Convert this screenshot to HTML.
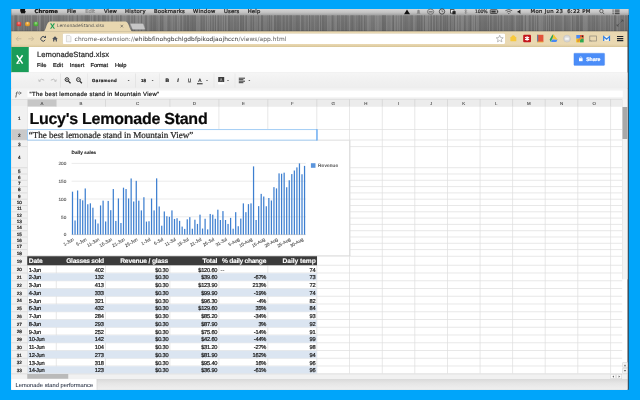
<!DOCTYPE html>
<html><head><meta charset="utf-8"><title>LemonadeStand.xlsx</title>
<style>
html,body{margin:0;padding:0;}
html{width:640px;height:400px;overflow:hidden;}
body{width:640px;height:400px;overflow:hidden;background:#00a5fa;position:relative;font-family:"Liberation Sans",sans-serif;}
div{position:absolute;box-sizing:border-box;}
.t{white-space:nowrap;color:#222;-webkit-text-stroke:0.22px;text-rendering:geometricPrecision;}
.b{font-weight:bold;}
svg{position:absolute;overflow:visible;}
</style></head><body><div id="w" style="left:0;top:0;width:2560px;height:1600px;transform:scale(0.25);transform-origin:0 0;-webkit-mask-image:linear-gradient(#000,#000);mask-image:linear-gradient(#000,#000);"><div id="z" style="left:0;top:0;width:640px;height:400px;zoom:4;">

<div style="left:11.30px;top:8.90px;width:617.50px;height:380.90px;background:#3c3c42;"></div>
<div style="left:11.30px;top:8.90px;width:617.50px;height:6.20px;background:linear-gradient(#d6d6d6,#c4c4c4 55%,#a4a4a4);"></div>
<div class="t" style="font-size:5.3px;line-height:6.36px;top:8.32px;letter-spacing:0.078px;left:34.50px;font-family:'DejaVu Sans','Liberation Sans',sans-serif;color:#111;font-weight:bold;">Chrome</div>
<div class="t" style="font-size:5.3px;line-height:6.36px;top:8.32px;letter-spacing:0.031px;left:67.00px;font-family:'DejaVu Sans','Liberation Sans',sans-serif;color:#1c1c1c;">File</div>
<div class="t" style="font-size:5.3px;line-height:6.36px;top:8.32px;letter-spacing:-0.141px;left:85.30px;font-family:'DejaVu Sans','Liberation Sans',sans-serif;color:#8a8a8a;">Edit</div>
<div class="t" style="font-size:5.3px;line-height:6.36px;top:8.32px;letter-spacing:0.105px;left:104.00px;font-family:'DejaVu Sans','Liberation Sans',sans-serif;color:#1c1c1c;">View</div>
<div class="t" style="font-size:5.3px;line-height:6.36px;top:8.32px;letter-spacing:0.306px;left:125.00px;font-family:'DejaVu Sans','Liberation Sans',sans-serif;color:#1c1c1c;">History</div>
<div class="t" style="font-size:5.3px;line-height:6.36px;top:8.32px;letter-spacing:0.156px;left:154.00px;font-family:'DejaVu Sans','Liberation Sans',sans-serif;color:#1c1c1c;">Bookmarks</div>
<div class="t" style="font-size:5.3px;line-height:6.36px;top:8.32px;letter-spacing:0.268px;left:193.00px;font-family:'DejaVu Sans','Liberation Sans',sans-serif;color:#1c1c1c;">Window</div>
<div class="t" style="font-size:5.3px;line-height:6.36px;top:8.32px;letter-spacing:0.131px;left:224.00px;font-family:'DejaVu Sans','Liberation Sans',sans-serif;color:#1c1c1c;">Users</div>
<div class="t" style="font-size:5.3px;line-height:6.36px;top:8.32px;letter-spacing:0.180px;left:247.70px;font-family:'DejaVu Sans','Liberation Sans',sans-serif;color:#1c1c1c;">Help</div>
<svg style="left:19.8px;top:8.9px" width="7" height="5" viewBox="0 0 7 5"><path d="M0.6 0 C0.2 1.2 0.5 3 1.6 4.3 C2.2 4.8 2.8 4.3 3.3 4.3 C3.8 4.3 4.4 4.8 5 4.3 C5.6 3.7 6 2.9 6.1 2.5 C5 2 4.9 0.8 5.6 0 Z" fill="#111"/></svg>
<div class="t" style="font-size:4.6px;line-height:5.52px;top:8.74px;letter-spacing:-0.160px;left:475.00px;font-family:'DejaVu Sans','Liberation Sans',sans-serif;color:#333;">100%</div>
<div class="t" style="font-size:5.3px;line-height:6.36px;top:8.32px;letter-spacing:0.302px;left:530.60px;font-family:'DejaVu Sans','Liberation Sans',sans-serif;color:#1c1c1c;">Mon Jun 23&nbsp; 6:22 PM</div>
<svg style="left:400px;top:8.9px" width="229" height="6.2" viewBox="400 8.9 229 6.2"><path d="M404 14.2 L407 9.4 L410 14.2 Z" fill="#111"/><path d="M416.5 13.6 L420.5 13.6 L419.7 12.4 L419.7 10.4 Q418.5 9 417.3 10.4 L417.3 12.4 Z" fill="#888"/><ellipse cx="430.6" cy="11.6" rx="3.2" ry="2.6" fill="none" stroke="#666" stroke-width="0.8"/><rect x="428.6" y="11" width="4" height="1.4" fill="#777"/><circle cx="442" cy="11.4" r="2.7" fill="none" stroke="#333" stroke-width="0.8"/><path d="M442 9.8 V11.5 H443.3" stroke="#333" stroke-width="0.5" fill="none"/><rect x="450.6" y="9.6" width="3.4" height="3.4" fill="#eee" stroke="#222" stroke-width="0.7"/><rect x="452.4" y="11" width="3.2" height="3.2" fill="#222"/><path d="M464.6 10 L466.8 12.6 L465.6 13.8 V9.2 L466.8 10.4 L464.6 13" stroke="#777" stroke-width="0.5" fill="none"/><rect x="490.3" y="9.6" width="7" height="3.8" rx="0.6" fill="none" stroke="#222" stroke-width="0.7"/><rect x="491.3" y="10.5" width="4.4" height="2" fill="#333"/><rect x="497.5" y="10.7" width="0.7" height="1.6" fill="#222"/><path d="M505.4 10.6 Q508.8 8.2 512.2 10.6" stroke="#444" stroke-width="0.8" fill="none"/><path d="M506.8 12 Q508.8 10.6 510.8 12" stroke="#444" stroke-width="0.8" fill="none"/><circle cx="508.8" cy="13.4" r="0.6" fill="#444"/><path d="M517.6 10.8 H518.6 L520.4 9.4 V13.8 L518.6 12.4 H517.6 Z" fill="#222"/><circle cx="601.4" cy="11" r="1.7" fill="none" stroke="#444" stroke-width="0.7"/><path d="M602.6 12.3 L604.2 14" stroke="#444" stroke-width="0.8"/><path d="M612.6 10 H613.6 M612.6 11.8 H613.6 M612.6 13.6 H613.6" stroke="#222" stroke-width="0.9"/><path d="M614.8 10 H619.6 M614.8 11.8 H619.6 M614.8 13.6 H619.6" stroke="#222" stroke-width="0.9"/></svg>
<div style="left:11.30px;top:15.10px;width:616.60px;height:16.20px;background:linear-gradient(90deg,rgba(255,255,255,0.099) 0.0px,rgba(255,255,255,0.099) 0.6px,rgba(255,255,255,0.033) 0.6px,rgba(255,255,255,0.033) 1.4px,rgba(255,255,255,0.071) 1.4px,rgba(255,255,255,0.071) 1.8px,rgba(0,0,0,0.030) 1.8px,rgba(0,0,0,0.030) 2.2px,rgba(255,255,255,0.090) 2.2px,rgba(255,255,255,0.090) 2.6px,rgba(0,0,0,0.102) 2.6px,rgba(0,0,0,0.102) 3.1px,rgba(0,0,0,0.018) 3.1px,rgba(0,0,0,0.018) 3.9px,rgba(0,0,0,0.090) 3.9px,rgba(0,0,0,0.090) 4.4px,rgba(0,0,0,0.097) 4.4px,rgba(0,0,0,0.097) 5.2px,rgba(0,0,0,0.083) 5.2px,rgba(0,0,0,0.083) 6.2px,rgba(255,255,255,0.029) 6.2px,rgba(255,255,255,0.029) 6.7px,rgba(255,255,255,0.098) 6.7px,rgba(255,255,255,0.098) 7.7px,rgba(255,255,255,0.019) 7.7px,rgba(255,255,255,0.019) 8.7px,rgba(255,255,255,0.105) 8.7px,rgba(255,255,255,0.105) 9.1px,rgba(255,255,255,0.012) 9.1px,rgba(255,255,255,0.012) 9.5px,rgba(0,0,0,0.046) 9.5px,rgba(0,0,0,0.046) 10.0px,rgba(255,255,255,0.009) 10.0px,rgba(255,255,255,0.009) 10.5px,rgba(0,0,0,0.042) 10.5px,rgba(0,0,0,0.042) 11.5px,rgba(255,255,255,0.040) 11.5px,rgba(255,255,255,0.040) 13.2px,rgba(255,255,255,0.018) 13.2px,rgba(255,255,255,0.018) 13.6px,rgba(0,0,0,0.069) 13.6px,rgba(0,0,0,0.069) 14.9px,rgba(255,255,255,0.011) 14.9px,rgba(255,255,255,0.011) 15.3px,rgba(255,255,255,0.014) 15.3px,rgba(255,255,255,0.014) 15.7px,rgba(0,0,0,0.065) 15.7px,rgba(0,0,0,0.065) 16.7px,rgba(255,255,255,0.007) 16.7px,rgba(255,255,255,0.007) 18.0px,rgba(0,0,0,0.041) 18.0px,rgba(0,0,0,0.041) 19.7px,rgba(255,255,255,0.093) 19.7px,rgba(255,255,255,0.093) 20.7px,rgba(0,0,0,0.044) 20.7px,rgba(0,0,0,0.044) 21.3px,rgba(0,0,0,0.070) 21.3px,rgba(0,0,0,0.070) 23.0px,rgba(0,0,0,0.056) 23.0px,rgba(0,0,0,0.056) 24.7px,rgba(0,0,0,0.044) 24.7px,rgba(0,0,0,0.044) 25.7px,rgba(255,255,255,0.083) 25.7px,rgba(255,255,255,0.083) 26.5px,rgba(0,0,0,0.011) 26.5px,rgba(0,0,0,0.011) 27.8px,rgba(255,255,255,0.106) 27.8px,rgba(255,255,255,0.106) 28.8px,rgba(255,255,255,0.003) 28.8px,rgba(255,255,255,0.003) 29.2px,rgba(255,255,255,0.057) 29.2px,rgba(255,255,255,0.057) 29.7px,rgba(255,255,255,0.095) 29.7px,rgba(255,255,255,0.095) 30.2px,rgba(0,0,0,0.101) 30.2px,rgba(0,0,0,0.101) 31.0px,rgba(0,0,0,0.093) 31.0px,rgba(0,0,0,0.093) 32.3px,rgba(255,255,255,0.016) 32.3px,rgba(255,255,255,0.016) 33.3px,rgba(0,0,0,0.041) 33.3px,rgba(0,0,0,0.041) 35.0px,rgba(0,0,0,0.033) 35.0px,rgba(0,0,0,0.033) 36.3px,rgba(255,255,255,0.018) 36.3px,rgba(255,255,255,0.018) 37.1px,rgba(0,0,0,0.095) 37.1px,rgba(0,0,0,0.095) 37.9px,rgba(255,255,255,0.098) 37.9px,rgba(255,255,255,0.098) 38.3px,rgba(255,255,255,0.043) 38.3px,rgba(255,255,255,0.043) 39.1px,rgba(0,0,0,0.097) 39.1px,rgba(0,0,0,0.097) 39.5px,rgba(0,0,0,0.042) 39.5px,rgba(0,0,0,0.042) 40.8px,rgba(255,255,255,0.108) 40.8px,rgba(255,255,255,0.108) 41.8px,rgba(0,0,0,0.012) 41.8px,rgba(0,0,0,0.012) 43.5px,rgba(0,0,0,0.025) 43.5px,rgba(0,0,0,0.025) 44.8px,rgba(0,0,0,0.034) 44.8px,rgba(0,0,0,0.034) 46.1px,rgba(0,0,0,0.032) 46.1px,rgba(0,0,0,0.032) 46.9px,rgba(0,0,0,0.084) 46.9px,rgba(0,0,0,0.084) 47.9px,rgba(0,0,0,0.062) 47.9px,rgba(0,0,0,0.062) 48.3px,rgba(0,0,0,0.082) 48.3px,rgba(0,0,0,0.082) 48.9px,rgba(0,0,0,0.022) 48.9px,rgba(0,0,0,0.022) 49.4px,rgba(0,0,0,0.001) 49.4px,rgba(0,0,0,0.001) 51.1px,rgba(0,0,0,0.011) 51.1px,rgba(0,0,0,0.011) 51.6px,rgba(0,0,0,0.049) 51.6px,rgba(0,0,0,0.049) 52.6px,rgba(255,255,255,0.070) 52.6px,rgba(255,255,255,0.070) 53.1px,rgba(255,255,255,0.011) 53.1px,rgba(255,255,255,0.011) 54.8px,rgba(0,0,0,0.019) 54.8px,rgba(0,0,0,0.019) 56.1px,rgba(255,255,255,0.040) 56.1px,rgba(255,255,255,0.040) 56.7px,rgba(255,255,255,0.101) 56.7px,rgba(255,255,255,0.101) 57.5px,rgba(0,0,0,0.092) 57.5px,rgba(0,0,0,0.092) 58.0px,rgba(0,0,0,0.059) 58.0px,rgba(0,0,0,0.059) 58.5px,rgba(0,0,0,0.107) 58.5px,rgba(0,0,0,0.107) 59.0px,rgba(255,255,255,0.020) 59.0px,rgba(255,255,255,0.020) 60.7px,rgba(0,0,0,0.048) 60.7px,rgba(0,0,0,0.048) 61.3px,rgba(0,0,0,0.018) 61.3px,rgba(0,0,0,0.018) 61.8px,rgba(255,255,255,0.024) 61.8px,rgba(255,255,255,0.024) 62.4px,rgba(255,255,255,0.100) 62.4px,rgba(255,255,255,0.100) 63.0px,rgba(255,255,255,0.079) 63.0px,rgba(255,255,255,0.079) 64.3px,rgba(255,255,255,0.034) 64.3px,rgba(255,255,255,0.034) 65.3px,rgba(0,0,0,0.098) 65.3px,rgba(0,0,0,0.098) 66.6px,rgba(255,255,255,0.062) 66.6px,rgba(255,255,255,0.062) 68.3px,rgba(255,255,255,0.040) 68.3px,rgba(255,255,255,0.040) 70.0px,rgba(0,0,0,0.024) 70.0px,rgba(0,0,0,0.024) 71.0px,rgba(0,0,0,0.023) 71.0px,rgba(0,0,0,0.023) 71.8px,rgba(255,255,255,0.030) 71.8px,rgba(255,255,255,0.030) 72.6px,rgba(0,0,0,0.068) 72.6px,rgba(0,0,0,0.068) 73.0px,rgba(0,0,0,0.013) 73.0px,rgba(0,0,0,0.013) 73.5px,rgba(0,0,0,0.035) 73.5px,rgba(0,0,0,0.035) 73.9px,rgba(0,0,0,0.087) 73.9px,rgba(0,0,0,0.087) 74.3px,rgba(0,0,0,0.077) 74.3px,rgba(0,0,0,0.077) 75.3px,rgba(255,255,255,0.099) 75.3px,rgba(255,255,255,0.099) 75.7px,rgba(0,0,0,0.104) 75.7px,rgba(0,0,0,0.104) 76.7px,rgba(0,0,0,0.064) 76.7px,rgba(0,0,0,0.064) 78.4px,rgba(0,0,0,0.077) 78.4px,rgba(0,0,0,0.077) 79.2px,rgba(255,255,255,0.100) 79.2px,rgba(255,255,255,0.100) 79.8px,rgba(0,0,0,0.030) 79.8px,rgba(0,0,0,0.030) 80.8px,rgba(0,0,0,0.085) 80.8px,rgba(0,0,0,0.085) 81.2px,rgba(255,255,255,0.108) 81.2px,rgba(255,255,255,0.108) 82.0px,rgba(0,0,0,0.004) 82.0px,rgba(0,0,0,0.004) 82.8px,rgba(0,0,0,0.091) 82.8px,rgba(0,0,0,0.091) 83.4px,rgba(255,255,255,0.055) 83.4px,rgba(255,255,255,0.055) 83.8px,rgba(0,0,0,0.052) 83.8px,rgba(0,0,0,0.052) 85.1px,rgba(255,255,255,0.042) 85.1px,rgba(255,255,255,0.042) 86.8px,rgba(0,0,0,0.105) 86.8px,rgba(0,0,0,0.105) 87.8px,rgba(0,0,0,0.030) 87.8px,rgba(0,0,0,0.030) 88.8px,rgba(255,255,255,0.009) 88.8px,rgba(255,255,255,0.009) 90.1px,rgba(255,255,255,0.057) 90.1px,rgba(255,255,255,0.057) 90.5px,rgba(255,255,255,0.105) 90.5px,rgba(255,255,255,0.105) 91.1px,rgba(0,0,0,0.090) 91.1px,rgba(0,0,0,0.090) 92.8px,rgba(0,0,0,0.053) 92.8px,rgba(0,0,0,0.053) 94.5px,rgba(255,255,255,0.090) 94.5px,rgba(255,255,255,0.090) 95.1px,rgba(255,255,255,0.060) 95.1px,rgba(255,255,255,0.060) 95.7px,rgba(255,255,255,0.009) 95.7px,rgba(255,255,255,0.009) 96.7px,rgba(0,0,0,0.037) 96.7px,rgba(0,0,0,0.037) 97.7px,rgba(255,255,255,0.025) 97.7px,rgba(255,255,255,0.025) 98.2px,rgba(255,255,255,0.107) 98.2px,rgba(255,255,255,0.107) 99.9px,rgba(0,0,0,0.067) 99.9px,rgba(0,0,0,0.067) 101.6px,rgba(255,255,255,0.070) 101.6px,rgba(255,255,255,0.070) 102.1px,rgba(255,255,255,0.067) 102.1px,rgba(255,255,255,0.067) 103.4px,rgba(255,255,255,0.004) 103.4px,rgba(255,255,255,0.004) 103.9px,rgba(255,255,255,0.051) 103.9px,rgba(255,255,255,0.051) 104.5px,rgba(255,255,255,0.064) 104.5px,rgba(255,255,255,0.064) 104.9px,rgba(0,0,0,0.053) 104.9px,rgba(0,0,0,0.053) 105.7px,rgba(255,255,255,0.023) 105.7px,rgba(255,255,255,0.023) 107.0px,rgba(0,0,0,0.012) 107.0px,rgba(0,0,0,0.012) 107.6px,rgba(255,255,255,0.107) 107.6px,rgba(255,255,255,0.107) 108.9px,rgba(0,0,0,0.092) 108.9px,rgba(0,0,0,0.092) 109.5px,rgba(0,0,0,0.060) 109.5px,rgba(0,0,0,0.060) 109.9px,rgba(0,0,0,0.036) 109.9px,rgba(0,0,0,0.036) 110.4px,rgba(255,255,255,0.027) 110.4px,rgba(255,255,255,0.027) 111.2px,rgba(255,255,255,0.075) 111.2px,rgba(255,255,255,0.075) 112.2px,rgba(255,255,255,0.090) 112.2px,rgba(255,255,255,0.090) 113.0px,rgba(255,255,255,0.066) 113.0px,rgba(255,255,255,0.066) 113.6px,rgba(255,255,255,0.074) 113.6px,rgba(255,255,255,0.074) 114.0px,rgba(255,255,255,0.090) 114.0px,rgba(255,255,255,0.090) 114.4px,rgba(255,255,255,0.047) 114.4px,rgba(255,255,255,0.047) 116.1px,rgba(0,0,0,0.005) 116.1px,rgba(0,0,0,0.005) 116.6px,rgba(0,0,0,0.015) 116.6px,rgba(0,0,0,0.015) 117.1px,rgba(0,0,0,0.037) 117.1px,rgba(0,0,0,0.037) 118.4px,rgba(255,255,255,0.098) 118.4px,rgba(255,255,255,0.098) 120.1px,rgba(0,0,0,0.023) 120.1px,rgba(0,0,0,0.023) 121.4px,rgba(255,255,255,0.054) 121.4px,rgba(255,255,255,0.054) 122.2px,rgba(255,255,255,0.049) 122.2px,rgba(255,255,255,0.049) 122.6px,rgba(255,255,255,0.108) 122.6px,rgba(255,255,255,0.108) 123.1px,rgba(0,0,0,0.077) 123.1px,rgba(0,0,0,0.077) 123.5px,rgba(255,255,255,0.067) 123.5px,rgba(255,255,255,0.067) 124.3px,rgba(255,255,255,0.025) 124.3px,rgba(255,255,255,0.025) 124.8px,rgba(255,255,255,0.106) 124.8px,rgba(255,255,255,0.106) 125.8px,rgba(255,255,255,0.096) 125.8px,rgba(255,255,255,0.096) 127.1px,rgba(255,255,255,0.011) 127.1px,rgba(255,255,255,0.011) 127.6px,rgba(0,0,0,0.105) 127.6px,rgba(0,0,0,0.105) 128.1px,rgba(255,255,255,0.104) 128.1px,rgba(255,255,255,0.104) 129.8px,rgba(0,0,0,0.087) 129.8px,rgba(0,0,0,0.087) 131.1px,rgba(255,255,255,0.095) 131.1px,rgba(255,255,255,0.095) 132.4px,rgba(255,255,255,0.107) 132.4px,rgba(255,255,255,0.107) 133.2px,rgba(255,255,255,0.072) 133.2px,rgba(255,255,255,0.072) 133.7px,rgba(0,0,0,0.104) 133.7px,rgba(0,0,0,0.104) 134.2px,rgba(0,0,0,0.046) 134.2px,rgba(0,0,0,0.046) 134.7px,rgba(255,255,255,0.058) 134.7px,rgba(255,255,255,0.058) 135.2px,rgba(0,0,0,0.053) 135.2px,rgba(0,0,0,0.053) 135.8px,rgba(255,255,255,0.074) 135.8px,rgba(255,255,255,0.074) 136.6px,rgba(255,255,255,0.090) 136.6px,rgba(255,255,255,0.090) 137.0px,rgba(255,255,255,0.087) 137.0px,rgba(255,255,255,0.087) 137.6px,rgba(255,255,255,0.018) 137.6px,rgba(255,255,255,0.018) 138.9px,rgba(0,0,0,0.017) 138.9px,rgba(0,0,0,0.017) 139.9px,rgba(0,0,0,0.081) 139.9px,rgba(0,0,0,0.081) 140.9px,rgba(255,255,255,0.005) 140.9px,rgba(255,255,255,0.005) 141.4px,rgba(255,255,255,0.082) 141.4px,rgba(255,255,255,0.082) 141.8px,rgba(0,0,0,0.070) 141.8px,rgba(0,0,0,0.070) 143.5px,rgba(255,255,255,0.061) 143.5px,rgba(255,255,255,0.061) 143.9px,rgba(0,0,0,0.072) 143.9px,rgba(0,0,0,0.072) 144.4px,rgba(255,255,255,0.026) 144.4px,rgba(255,255,255,0.026) 145.2px,rgba(255,255,255,0.012) 145.2px,rgba(255,255,255,0.012) 145.6px,rgba(255,255,255,0.040) 145.6px,rgba(255,255,255,0.040) 146.2px,rgba(255,255,255,0.012) 146.2px,rgba(255,255,255,0.012) 147.2px,rgba(255,255,255,0.061) 147.2px,rgba(255,255,255,0.061) 148.9px,rgba(0,0,0,0.097) 148.9px,rgba(0,0,0,0.097) 149.9px,rgba(0,0,0,0.049) 149.9px,rgba(0,0,0,0.049) 150.4px,rgba(0,0,0,0.088) 150.4px,rgba(0,0,0,0.088) 152.1px,rgba(255,255,255,0.014) 152.1px,rgba(255,255,255,0.014) 152.9px,rgba(255,255,255,0.087) 152.9px,rgba(255,255,255,0.087) 154.6px,rgba(0,0,0,0.012) 154.6px,rgba(0,0,0,0.012) 155.0px,rgba(255,255,255,0.104) 155.0px,rgba(255,255,255,0.104) 156.0px,rgba(255,255,255,0.003) 156.0px,rgba(255,255,255,0.003) 157.0px,rgba(0,0,0,0.049) 157.0px,rgba(0,0,0,0.049) 158.3px,rgba(255,255,255,0.007) 158.3px,rgba(255,255,255,0.007) 159.3px,rgba(255,255,255,0.002) 159.3px,rgba(255,255,255,0.002) 160.1px,rgba(255,255,255,0.044) 160.1px,rgba(255,255,255,0.044) 160.6px,rgba(255,255,255,0.093) 160.6px,rgba(255,255,255,0.093) 161.2px,rgba(255,255,255,0.075) 161.2px,rgba(255,255,255,0.075) 161.7px,rgba(0,0,0,0.018) 161.7px,rgba(0,0,0,0.018) 162.2px,rgba(0,0,0,0.013) 162.2px,rgba(0,0,0,0.013) 163.0px,rgba(255,255,255,0.038) 163.0px,rgba(255,255,255,0.038) 163.4px,rgba(0,0,0,0.094) 163.4px,rgba(0,0,0,0.094) 164.2px,rgba(0,0,0,0.043) 164.2px,rgba(0,0,0,0.043) 165.5px,rgba(255,255,255,0.087) 165.5px,rgba(255,255,255,0.087) 165.9px,rgba(255,255,255,0.097) 165.9px,rgba(255,255,255,0.097) 166.4px,rgba(255,255,255,0.035) 166.4px,rgba(255,255,255,0.035) 167.7px,rgba(0,0,0,0.054) 167.7px,rgba(0,0,0,0.054) 168.2px,rgba(255,255,255,0.103) 168.2px,rgba(255,255,255,0.103) 168.7px,rgba(255,255,255,0.054) 168.7px,rgba(255,255,255,0.054) 169.2px,rgba(0,0,0,0.022) 169.2px,rgba(0,0,0,0.022) 169.6px,rgba(0,0,0,0.074) 169.6px,rgba(0,0,0,0.074) 170.4px,rgba(255,255,255,0.073) 170.4px,rgba(255,255,255,0.073) 171.7px,rgba(255,255,255,0.045) 171.7px,rgba(255,255,255,0.045) 172.2px,rgba(0,0,0,0.021) 172.2px,rgba(0,0,0,0.021) 173.2px,rgba(0,0,0,0.067) 173.2px,rgba(0,0,0,0.067) 174.0px,rgba(0,0,0,0.090) 174.0px,rgba(0,0,0,0.090) 174.6px,rgba(0,0,0,0.106) 174.6px,rgba(0,0,0,0.106) 175.2px,rgba(0,0,0,0.009) 175.2px,rgba(0,0,0,0.009) 176.2px,rgba(0,0,0,0.106) 176.2px,rgba(0,0,0,0.106) 177.5px,rgba(255,255,255,0.004) 177.5px,rgba(255,255,255,0.004) 178.1px,rgba(255,255,255,0.003) 178.1px,rgba(255,255,255,0.003) 178.7px,rgba(0,0,0,0.085) 178.7px,rgba(0,0,0,0.085) 179.1px,rgba(0,0,0,0.060) 179.1px,rgba(0,0,0,0.060) 180.8px,rgba(0,0,0,0.092) 180.8px,rgba(0,0,0,0.092) 181.2px,rgba(0,0,0,0.101) 181.2px,rgba(0,0,0,0.101) 181.8px,rgba(0,0,0,0.070) 181.8px,rgba(0,0,0,0.070) 183.5px,rgba(0,0,0,0.081) 183.5px,rgba(0,0,0,0.081) 185.2px,rgba(255,255,255,0.077) 185.2px,rgba(255,255,255,0.077) 186.0px,rgba(255,255,255,0.070) 186.0px,rgba(255,255,255,0.070) 187.3px,rgba(0,0,0,0.021) 187.3px,rgba(0,0,0,0.021) 187.9px,rgba(255,255,255,0.092) 187.9px,rgba(255,255,255,0.092) 188.9px,rgba(0,0,0,0.001) 188.9px,rgba(0,0,0,0.001) 189.9px,rgba(0,0,0,0.090) 189.9px,rgba(0,0,0,0.090) 190.5px,rgba(255,255,255,0.066) 190.5px,rgba(255,255,255,0.066) 190.9px,rgba(0,0,0,0.016) 190.9px,rgba(0,0,0,0.016) 191.4px,rgba(0,0,0,0.051) 191.4px,rgba(0,0,0,0.051) 191.8px,rgba(255,255,255,0.030) 191.8px,rgba(255,255,255,0.030) 192.2px,rgba(0,0,0,0.053) 192.2px,rgba(0,0,0,0.053) 193.9px,rgba(255,255,255,0.078) 193.9px,rgba(255,255,255,0.078) 194.9px,rgba(0,0,0,0.052) 194.9px,rgba(0,0,0,0.052) 195.3px,rgba(0,0,0,0.010) 195.3px,rgba(0,0,0,0.010) 195.7px,rgba(255,255,255,0.109) 195.7px,rgba(255,255,255,0.109) 196.3px,rgba(255,255,255,0.094) 196.3px,rgba(255,255,255,0.094) 197.1px,rgba(255,255,255,0.027) 197.1px,rgba(255,255,255,0.027) 197.7px,rgba(255,255,255,0.006) 197.7px,rgba(255,255,255,0.006) 198.1px,rgba(255,255,255,0.096) 198.1px,rgba(255,255,255,0.096) 198.6px,rgba(0,0,0,0.052) 198.6px,rgba(0,0,0,0.052) 199.1px,rgba(0,0,0,0.066) 199.1px,rgba(0,0,0,0.066) 199.6px,rgba(255,255,255,0.028) 199.6px,rgba(255,255,255,0.028) 200.2px,rgba(255,255,255,0.057) 200.2px,rgba(255,255,255,0.057) 201.2px,rgba(0,0,0,0.012) 201.2px,rgba(0,0,0,0.012) 201.8px,rgba(0,0,0,0.071) 201.8px,rgba(0,0,0,0.071) 203.1px,rgba(255,255,255,0.067) 203.1px,rgba(255,255,255,0.067) 203.7px,rgba(0,0,0,0.102) 203.7px,rgba(0,0,0,0.102) 204.3px,rgba(255,255,255,0.051) 204.3px,rgba(255,255,255,0.051) 204.7px,rgba(255,255,255,0.105) 204.7px,rgba(255,255,255,0.105) 205.7px,rgba(0,0,0,0.006) 205.7px,rgba(0,0,0,0.006) 206.7px,rgba(0,0,0,0.087) 206.7px,rgba(0,0,0,0.087) 207.5px,rgba(255,255,255,0.033) 207.5px,rgba(255,255,255,0.033) 209.2px,rgba(0,0,0,0.001) 209.2px,rgba(0,0,0,0.001) 210.5px,rgba(255,255,255,0.086) 210.5px,rgba(255,255,255,0.086) 212.2px,rgba(0,0,0,0.042) 212.2px,rgba(0,0,0,0.042) 213.2px,rgba(255,255,255,0.106) 213.2px,rgba(255,255,255,0.106) 213.7px,rgba(0,0,0,0.066) 213.7px,rgba(0,0,0,0.066) 214.3px,rgba(255,255,255,0.050) 214.3px,rgba(255,255,255,0.050) 215.6px,rgba(0,0,0,0.021) 215.6px,rgba(0,0,0,0.021) 216.1px,rgba(255,255,255,0.106) 216.1px,rgba(255,255,255,0.106) 216.7px,rgba(0,0,0,0.081) 216.7px,rgba(0,0,0,0.081) 218.4px,rgba(255,255,255,0.028) 218.4px,rgba(255,255,255,0.028) 218.8px,rgba(0,0,0,0.015) 218.8px,rgba(0,0,0,0.015) 219.4px,rgba(0,0,0,0.091) 219.4px,rgba(0,0,0,0.091) 219.8px,rgba(0,0,0,0.026) 219.8px,rgba(0,0,0,0.026) 221.5px,rgba(255,255,255,0.038) 221.5px,rgba(255,255,255,0.038) 222.5px,rgba(255,255,255,0.022) 222.5px,rgba(255,255,255,0.022) 223.1px,rgba(0,0,0,0.046) 223.1px,rgba(0,0,0,0.046) 224.4px,rgba(0,0,0,0.069) 224.4px,rgba(0,0,0,0.069) 225.2px,rgba(0,0,0,0.012) 225.2px,rgba(0,0,0,0.012) 225.8px,rgba(0,0,0,0.030) 225.8px,rgba(0,0,0,0.030) 226.4px,rgba(255,255,255,0.104) 226.4px,rgba(255,255,255,0.104) 227.0px,rgba(0,0,0,0.039) 227.0px,rgba(0,0,0,0.039) 228.0px,rgba(255,255,255,0.102) 228.0px,rgba(255,255,255,0.102) 228.4px,rgba(0,0,0,0.062) 228.4px,rgba(0,0,0,0.062) 229.0px,rgba(0,0,0,0.110) 229.0px,rgba(0,0,0,0.110) 229.5px,rgba(0,0,0,0.092) 229.5px,rgba(0,0,0,0.092) 230.3px,rgba(255,255,255,0.001) 230.3px,rgba(255,255,255,0.001) 230.9px,rgba(0,0,0,0.055) 230.9px,rgba(0,0,0,0.055) 231.4px,rgba(0,0,0,0.109) 231.4px,rgba(0,0,0,0.109) 233.1px,rgba(255,255,255,0.070) 233.1px,rgba(255,255,255,0.070) 233.7px,rgba(0,0,0,0.022) 233.7px,rgba(0,0,0,0.022) 234.2px,rgba(0,0,0,0.023) 234.2px,rgba(0,0,0,0.023) 234.6px,rgba(0,0,0,0.043) 234.6px,rgba(0,0,0,0.043) 235.2px,rgba(0,0,0,0.091) 235.2px,rgba(0,0,0,0.091) 235.7px,rgba(255,255,255,0.078) 235.7px,rgba(255,255,255,0.078) 236.7px,rgba(255,255,255,0.035) 236.7px,rgba(255,255,255,0.035) 237.2px,rgba(255,255,255,0.062) 237.2px,rgba(255,255,255,0.062) 238.5px,rgba(0,0,0,0.024) 238.5px,rgba(0,0,0,0.024) 239.5px,rgba(255,255,255,0.049) 239.5px,rgba(255,255,255,0.049) 240.1px,rgba(0,0,0,0.077) 240.1px,rgba(0,0,0,0.077) 240.9px,rgba(255,255,255,0.026) 240.9px,rgba(255,255,255,0.026) 242.2px,rgba(0,0,0,0.100) 242.2px,rgba(0,0,0,0.100) 242.7px,rgba(255,255,255,0.047) 242.7px,rgba(255,255,255,0.047) 244.4px,rgba(255,255,255,0.028) 244.4px,rgba(255,255,255,0.028) 245.4px,rgba(255,255,255,0.044) 245.4px,rgba(255,255,255,0.044) 246.7px,rgba(0,0,0,0.079) 246.7px,rgba(0,0,0,0.079) 247.7px,rgba(255,255,255,0.056) 247.7px,rgba(255,255,255,0.056) 248.7px,rgba(255,255,255,0.074) 248.7px,rgba(255,255,255,0.074) 249.7px,rgba(0,0,0,0.106) 249.7px,rgba(0,0,0,0.106) 251.4px,rgba(255,255,255,0.018) 251.4px,rgba(255,255,255,0.018) 252.7px,rgba(255,255,255,0.040) 252.7px,rgba(255,255,255,0.040) 254.0px,rgba(255,255,255,0.031) 254.0px,rgba(255,255,255,0.031) 255.3px,rgba(0,0,0,0.103) 255.3px,rgba(0,0,0,0.103) 255.7px,rgba(255,255,255,0.030) 255.7px,rgba(255,255,255,0.030) 256.2px,rgba(0,0,0,0.027) 256.2px,rgba(0,0,0,0.027) 256.6px,rgba(255,255,255,0.013) 256.6px,rgba(255,255,255,0.013) 257.4px,rgba(0,0,0,0.106) 257.4px,rgba(0,0,0,0.106) 258.7px,rgba(255,255,255,0.040) 258.7px,rgba(255,255,255,0.040) 259.7px,rgba(0,0,0,0.052) 259.7px,rgba(0,0,0,0.052) 260.5px,rgba(255,255,255,0.065) 260.5px,rgba(255,255,255,0.065) 261.3px,rgba(255,255,255,0.095) 261.3px,rgba(255,255,255,0.095) 262.6px,rgba(0,0,0,0.090) 262.6px,rgba(0,0,0,0.090) 263.6px,rgba(0,0,0,0.095) 263.6px,rgba(0,0,0,0.095) 264.6px,rgba(0,0,0,0.006) 264.6px,rgba(0,0,0,0.006) 265.9px,rgba(0,0,0,0.094) 265.9px,rgba(0,0,0,0.094) 267.6px,rgba(0,0,0,0.058) 267.6px,rgba(0,0,0,0.058) 268.2px,rgba(0,0,0,0.065) 268.2px,rgba(0,0,0,0.065) 269.9px,rgba(255,255,255,0.033) 269.9px,rgba(255,255,255,0.033) 271.2px,rgba(0,0,0,0.001) 271.2px,rgba(0,0,0,0.001) 272.0px,rgba(0,0,0,0.093) 272.0px,rgba(0,0,0,0.093) 272.8px,rgba(0,0,0,0.047) 272.8px,rgba(0,0,0,0.047) 274.1px,rgba(255,255,255,0.026) 274.1px,rgba(255,255,255,0.026) 274.5px,rgba(0,0,0,0.066) 274.5px,rgba(0,0,0,0.066) 275.8px,rgba(0,0,0,0.078) 275.8px,rgba(0,0,0,0.078) 276.8px,rgba(255,255,255,0.033) 276.8px,rgba(255,255,255,0.033) 277.4px,rgba(0,0,0,0.043) 277.4px,rgba(0,0,0,0.043) 278.7px,rgba(0,0,0,0.081) 278.7px,rgba(0,0,0,0.081) 279.7px,rgba(0,0,0,0.097) 279.7px,rgba(0,0,0,0.097) 280.5px,rgba(255,255,255,0.104) 280.5px,rgba(255,255,255,0.104) 281.1px,rgba(255,255,255,0.042) 281.1px,rgba(255,255,255,0.042) 281.5px,rgba(0,0,0,0.002) 281.5px,rgba(0,0,0,0.002) 282.8px,rgba(255,255,255,0.004) 282.8px,rgba(255,255,255,0.004) 284.1px,rgba(0,0,0,0.008) 284.1px,rgba(0,0,0,0.008) 284.9px,rgba(0,0,0,0.084) 284.9px,rgba(0,0,0,0.084) 286.6px,rgba(0,0,0,0.066) 286.6px,rgba(0,0,0,0.066) 287.6px,rgba(255,255,255,0.096) 287.6px,rgba(255,255,255,0.096) 288.0px,rgba(0,0,0,0.046) 288.0px,rgba(0,0,0,0.046) 288.4px,rgba(255,255,255,0.070) 288.4px,rgba(255,255,255,0.070) 288.8px,rgba(255,255,255,0.109) 288.8px,rgba(255,255,255,0.109) 289.6px,rgba(0,0,0,0.064) 289.6px,rgba(0,0,0,0.064) 290.4px,rgba(0,0,0,0.094) 290.4px,rgba(0,0,0,0.094) 290.9px,rgba(0,0,0,0.079) 290.9px,rgba(0,0,0,0.079) 291.3px,rgba(0,0,0,0.052) 291.3px,rgba(0,0,0,0.052) 292.3px,rgba(0,0,0,0.081) 292.3px,rgba(0,0,0,0.081) 292.9px,rgba(255,255,255,0.029) 292.9px,rgba(255,255,255,0.029) 294.6px,rgba(255,255,255,0.085) 294.6px,rgba(255,255,255,0.085) 295.2px,rgba(0,0,0,0.030) 295.2px,rgba(0,0,0,0.030) 296.5px,rgba(255,255,255,0.087) 296.5px,rgba(255,255,255,0.087) 297.3px,rgba(0,0,0,0.023) 297.3px,rgba(0,0,0,0.023) 298.1px,rgba(0,0,0,0.109) 298.1px,rgba(0,0,0,0.109) 298.6px,rgba(255,255,255,0.040) 298.6px,rgba(255,255,255,0.040) 299.4px,rgba(0,0,0,0.044) 299.4px,rgba(0,0,0,0.044) 300.2px,rgba(0,0,0,0.018) 300.2px,rgba(0,0,0,0.018) 300.7px,rgba(0,0,0,0.040) 300.7px,rgba(0,0,0,0.040) 301.5px,rgba(0,0,0,0.037) 301.5px,rgba(0,0,0,0.037) 303.2px,rgba(255,255,255,0.055) 303.2px,rgba(255,255,255,0.055) 303.8px,rgba(0,0,0,0.022) 303.8px,rgba(0,0,0,0.022) 305.5px,rgba(255,255,255,0.047) 305.5px,rgba(255,255,255,0.047) 306.0px,rgba(0,0,0,0.046) 306.0px,rgba(0,0,0,0.046) 307.3px,rgba(0,0,0,0.096) 307.3px,rgba(0,0,0,0.096) 307.9px,rgba(255,255,255,0.110) 307.9px,rgba(255,255,255,0.110) 308.7px,rgba(0,0,0,0.093) 308.7px,rgba(0,0,0,0.093) 309.7px,rgba(255,255,255,0.056) 309.7px,rgba(255,255,255,0.056) 310.5px,rgba(0,0,0,0.099) 310.5px,rgba(0,0,0,0.099) 312.2px,rgba(0,0,0,0.099) 312.2px,rgba(0,0,0,0.099) 312.6px,rgba(0,0,0,0.047) 312.6px,rgba(0,0,0,0.047) 313.9px,rgba(0,0,0,0.055) 313.9px,rgba(0,0,0,0.055) 314.4px,rgba(0,0,0,0.014) 314.4px,rgba(0,0,0,0.014) 315.0px,rgba(0,0,0,0.068) 315.0px,rgba(0,0,0,0.068) 315.6px,rgba(255,255,255,0.063) 315.6px,rgba(255,255,255,0.063) 316.2px,rgba(255,255,255,0.085) 316.2px,rgba(255,255,255,0.085) 317.0px,rgba(255,255,255,0.058) 317.0px,rgba(255,255,255,0.058) 318.7px,rgba(255,255,255,0.091) 318.7px,rgba(255,255,255,0.091) 319.5px,rgba(255,255,255,0.011) 319.5px,rgba(255,255,255,0.011) 320.5px,rgba(0,0,0,0.092) 320.5px,rgba(0,0,0,0.092) 321.8px,rgba(0,0,0,0.020) 321.8px,rgba(0,0,0,0.020) 323.1px,rgba(255,255,255,0.056) 323.1px,rgba(255,255,255,0.056) 324.1px,rgba(255,255,255,0.081) 324.1px,rgba(255,255,255,0.081) 325.4px,rgba(0,0,0,0.099) 325.4px,rgba(0,0,0,0.099) 326.2px,rgba(0,0,0,0.082) 326.2px,rgba(0,0,0,0.082) 327.2px,rgba(0,0,0,0.019) 327.2px,rgba(0,0,0,0.019) 328.0px,rgba(0,0,0,0.044) 328.0px,rgba(0,0,0,0.044) 328.6px,rgba(255,255,255,0.053) 328.6px,rgba(255,255,255,0.053) 329.9px,rgba(0,0,0,0.053) 329.9px,rgba(0,0,0,0.053) 331.2px,rgba(0,0,0,0.057) 331.2px,rgba(0,0,0,0.057) 332.5px,rgba(255,255,255,0.013) 332.5px,rgba(255,255,255,0.013) 333.3px,rgba(0,0,0,0.084) 333.3px,rgba(0,0,0,0.084) 334.1px,rgba(0,0,0,0.074) 334.1px,rgba(0,0,0,0.074) 335.4px,rgba(255,255,255,0.000) 335.4px,rgba(255,255,255,0.000) 335.9px,rgba(0,0,0,0.001) 335.9px,rgba(0,0,0,0.001) 337.6px,rgba(0,0,0,0.010) 337.6px,rgba(0,0,0,0.010) 338.1px,rgba(255,255,255,0.109) 338.1px,rgba(255,255,255,0.109) 338.7px,rgba(0,0,0,0.016) 338.7px,rgba(0,0,0,0.016) 339.5px,rgba(0,0,0,0.068) 339.5px,rgba(0,0,0,0.068) 340.5px,rgba(0,0,0,0.072) 340.5px,rgba(0,0,0,0.072) 340.9px,rgba(0,0,0,0.090) 340.9px,rgba(0,0,0,0.090) 341.9px,rgba(0,0,0,0.029) 341.9px,rgba(0,0,0,0.029) 342.4px,rgba(255,255,255,0.015) 342.4px,rgba(255,255,255,0.015) 344.1px,rgba(255,255,255,0.055) 344.1px,rgba(255,255,255,0.055) 344.5px,rgba(0,0,0,0.026) 344.5px,rgba(0,0,0,0.026) 345.3px,rgba(255,255,255,0.005) 345.3px,rgba(255,255,255,0.005) 346.6px,rgba(0,0,0,0.051) 346.6px,rgba(0,0,0,0.051) 347.4px,rgba(0,0,0,0.096) 347.4px,rgba(0,0,0,0.096) 349.1px,rgba(255,255,255,0.016) 349.1px,rgba(255,255,255,0.016) 349.7px,rgba(0,0,0,0.082) 349.7px,rgba(0,0,0,0.082) 350.3px,rgba(255,255,255,0.006) 350.3px,rgba(255,255,255,0.006) 351.3px,rgba(255,255,255,0.080) 351.3px,rgba(255,255,255,0.080) 353.0px,rgba(0,0,0,0.090) 353.0px,rgba(0,0,0,0.090) 353.5px,rgba(0,0,0,0.025) 353.5px,rgba(0,0,0,0.025) 354.0px,rgba(0,0,0,0.012) 354.0px,rgba(0,0,0,0.012) 355.3px,rgba(255,255,255,0.077) 355.3px,rgba(255,255,255,0.077) 355.9px,rgba(255,255,255,0.103) 355.9px,rgba(255,255,255,0.103) 357.6px,rgba(0,0,0,0.103) 357.6px,rgba(0,0,0,0.103) 358.1px,rgba(255,255,255,0.058) 358.1px,rgba(255,255,255,0.058) 359.4px,rgba(0,0,0,0.006) 359.4px,rgba(0,0,0,0.006) 361.1px,rgba(0,0,0,0.002) 361.1px,rgba(0,0,0,0.002) 362.1px,rgba(0,0,0,0.024) 362.1px,rgba(0,0,0,0.024) 362.5px,rgba(255,255,255,0.006) 362.5px,rgba(255,255,255,0.006) 364.2px,rgba(255,255,255,0.104) 364.2px,rgba(255,255,255,0.104) 365.0px,rgba(255,255,255,0.062) 365.0px,rgba(255,255,255,0.062) 365.5px,rgba(0,0,0,0.076) 365.5px,rgba(0,0,0,0.076) 366.0px,rgba(255,255,255,0.104) 366.0px,rgba(255,255,255,0.104) 367.0px,rgba(255,255,255,0.097) 367.0px,rgba(255,255,255,0.097) 367.4px,rgba(255,255,255,0.044) 367.4px,rgba(255,255,255,0.044) 368.7px,rgba(255,255,255,0.058) 368.7px,rgba(255,255,255,0.058) 370.4px,rgba(0,0,0,0.091) 370.4px,rgba(0,0,0,0.091) 371.2px,rgba(0,0,0,0.101) 371.2px,rgba(0,0,0,0.101) 372.9px,rgba(0,0,0,0.082) 372.9px,rgba(0,0,0,0.082) 374.6px,rgba(255,255,255,0.092) 374.6px,rgba(255,255,255,0.092) 375.6px,rgba(255,255,255,0.047) 375.6px,rgba(255,255,255,0.047) 376.9px,rgba(255,255,255,0.028) 376.9px,rgba(255,255,255,0.028) 377.4px,rgba(255,255,255,0.030) 377.4px,rgba(255,255,255,0.030) 378.4px,rgba(255,255,255,0.058) 378.4px,rgba(255,255,255,0.058) 379.7px,rgba(0,0,0,0.095) 379.7px,rgba(0,0,0,0.095) 380.1px,rgba(255,255,255,0.098) 380.1px,rgba(255,255,255,0.098) 381.1px,rgba(0,0,0,0.025) 381.1px,rgba(0,0,0,0.025) 381.6px,rgba(255,255,255,0.064) 381.6px,rgba(255,255,255,0.064) 382.1px,rgba(0,0,0,0.108) 382.1px,rgba(0,0,0,0.108) 382.5px,rgba(255,255,255,0.109) 382.5px,rgba(255,255,255,0.109) 383.1px,rgba(255,255,255,0.101) 383.1px,rgba(255,255,255,0.101) 383.7px,rgba(255,255,255,0.075) 383.7px,rgba(255,255,255,0.075) 385.0px,rgba(0,0,0,0.005) 385.0px,rgba(0,0,0,0.005) 385.5px,rgba(255,255,255,0.010) 385.5px,rgba(255,255,255,0.010) 386.0px,rgba(255,255,255,0.101) 386.0px,rgba(255,255,255,0.101) 386.4px,rgba(255,255,255,0.033) 386.4px,rgba(255,255,255,0.033) 387.7px,rgba(0,0,0,0.105) 387.7px,rgba(0,0,0,0.105) 388.1px,rgba(255,255,255,0.085) 388.1px,rgba(255,255,255,0.085) 388.9px,rgba(0,0,0,0.018) 388.9px,rgba(0,0,0,0.018) 390.2px,rgba(0,0,0,0.060) 390.2px,rgba(0,0,0,0.060) 390.8px,rgba(255,255,255,0.094) 390.8px,rgba(255,255,255,0.094) 391.6px,rgba(0,0,0,0.002) 391.6px,rgba(0,0,0,0.002) 392.1px,rgba(0,0,0,0.036) 392.1px,rgba(0,0,0,0.036) 393.4px,rgba(0,0,0,0.030) 393.4px,rgba(0,0,0,0.030) 394.2px,rgba(0,0,0,0.066) 394.2px,rgba(0,0,0,0.066) 395.0px,rgba(0,0,0,0.046) 395.0px,rgba(0,0,0,0.046) 396.7px,rgba(255,255,255,0.001) 396.7px,rgba(255,255,255,0.001) 398.4px,rgba(0,0,0,0.001) 398.4px,rgba(0,0,0,0.001) 398.9px,rgba(0,0,0,0.041) 398.9px,rgba(0,0,0,0.041) 399.4px,rgba(0,0,0,0.067) 399.4px,rgba(0,0,0,0.067) 401.1px,rgba(0,0,0,0.061) 401.1px,rgba(0,0,0,0.061) 401.9px,rgba(255,255,255,0.086) 401.9px,rgba(255,255,255,0.086) 403.6px,rgba(255,255,255,0.099) 403.6px,rgba(255,255,255,0.099) 404.0px,rgba(255,255,255,0.024) 404.0px,rgba(255,255,255,0.024) 404.8px,rgba(0,0,0,0.003) 404.8px,rgba(0,0,0,0.003) 405.3px,rgba(0,0,0,0.098) 405.3px,rgba(0,0,0,0.098) 406.6px,rgba(0,0,0,0.078) 406.6px,rgba(0,0,0,0.078) 407.6px,rgba(0,0,0,0.098) 407.6px,rgba(0,0,0,0.098) 408.4px,rgba(255,255,255,0.104) 408.4px,rgba(255,255,255,0.104) 408.8px,rgba(0,0,0,0.019) 408.8px,rgba(0,0,0,0.019) 409.3px,rgba(0,0,0,0.097) 409.3px,rgba(0,0,0,0.097) 410.6px,rgba(0,0,0,0.011) 410.6px,rgba(0,0,0,0.011) 411.4px,rgba(255,255,255,0.084) 411.4px,rgba(255,255,255,0.084) 412.7px,rgba(0,0,0,0.085) 412.7px,rgba(0,0,0,0.085) 414.0px,rgba(255,255,255,0.095) 414.0px,rgba(255,255,255,0.095) 414.4px,rgba(0,0,0,0.068) 414.4px,rgba(0,0,0,0.068) 415.0px,rgba(255,255,255,0.096) 415.0px,rgba(255,255,255,0.096) 416.3px,rgba(0,0,0,0.007) 416.3px,rgba(0,0,0,0.007) 417.6px,rgba(255,255,255,0.036) 417.6px,rgba(255,255,255,0.036) 418.2px,rgba(255,255,255,0.075) 418.2px,rgba(255,255,255,0.075) 419.0px,rgba(0,0,0,0.013) 419.0px,rgba(0,0,0,0.013) 419.6px,rgba(0,0,0,0.109) 419.6px,rgba(0,0,0,0.109) 420.0px,rgba(0,0,0,0.092) 420.0px,rgba(0,0,0,0.092) 420.6px,rgba(255,255,255,0.100) 420.6px,rgba(255,255,255,0.100) 421.4px,rgba(255,255,255,0.013) 421.4px,rgba(255,255,255,0.013) 421.8px,rgba(0,0,0,0.064) 421.8px,rgba(0,0,0,0.064) 423.5px,rgba(255,255,255,0.059) 423.5px,rgba(255,255,255,0.059) 424.1px,rgba(255,255,255,0.071) 424.1px,rgba(255,255,255,0.071) 424.7px,rgba(0,0,0,0.091) 424.7px,rgba(0,0,0,0.091) 425.5px,rgba(0,0,0,0.006) 425.5px,rgba(0,0,0,0.006) 426.8px,rgba(255,255,255,0.009) 426.8px,rgba(255,255,255,0.009) 427.4px,rgba(0,0,0,0.068) 427.4px,rgba(0,0,0,0.068) 428.2px,rgba(255,255,255,0.052) 428.2px,rgba(255,255,255,0.052) 428.8px,rgba(0,0,0,0.103) 428.8px,rgba(0,0,0,0.103) 429.6px,rgba(0,0,0,0.055) 429.6px,rgba(0,0,0,0.055) 430.4px,rgba(255,255,255,0.059) 430.4px,rgba(255,255,255,0.059) 431.7px,rgba(0,0,0,0.027) 431.7px,rgba(0,0,0,0.027) 432.1px,rgba(0,0,0,0.096) 432.1px,rgba(0,0,0,0.096) 432.9px,rgba(0,0,0,0.053) 432.9px,rgba(0,0,0,0.053) 433.3px,rgba(0,0,0,0.096) 433.3px,rgba(0,0,0,0.096) 434.6px,rgba(0,0,0,0.035) 434.6px,rgba(0,0,0,0.035) 435.6px,rgba(0,0,0,0.036) 435.6px,rgba(0,0,0,0.036) 436.2px,rgba(0,0,0,0.100) 436.2px,rgba(0,0,0,0.100) 437.2px,rgba(255,255,255,0.048) 437.2px,rgba(255,255,255,0.048) 438.5px,rgba(255,255,255,0.093) 438.5px,rgba(255,255,255,0.093) 439.1px,rgba(0,0,0,0.109) 439.1px,rgba(0,0,0,0.109) 439.7px,rgba(255,255,255,0.021) 439.7px,rgba(255,255,255,0.021) 441.4px,rgba(255,255,255,0.029) 441.4px,rgba(255,255,255,0.029) 443.1px,rgba(0,0,0,0.105) 443.1px,rgba(0,0,0,0.105) 443.5px,rgba(0,0,0,0.086) 443.5px,rgba(0,0,0,0.086) 444.0px,rgba(255,255,255,0.100) 444.0px,rgba(255,255,255,0.100) 445.3px,rgba(0,0,0,0.025) 445.3px,rgba(0,0,0,0.025) 447.0px,rgba(255,255,255,0.091) 447.0px,rgba(255,255,255,0.091) 447.6px,rgba(0,0,0,0.001) 447.6px,rgba(0,0,0,0.001) 449.3px,rgba(0,0,0,0.070) 449.3px,rgba(0,0,0,0.070) 450.1px,rgba(255,255,255,0.095) 450.1px,rgba(255,255,255,0.095) 451.8px,rgba(255,255,255,0.071) 451.8px,rgba(255,255,255,0.071) 452.4px,rgba(0,0,0,0.077) 452.4px,rgba(0,0,0,0.077) 454.1px,rgba(0,0,0,0.038) 454.1px,rgba(0,0,0,0.038) 454.6px,rgba(0,0,0,0.009) 454.6px,rgba(0,0,0,0.009) 455.2px,rgba(255,255,255,0.062) 455.2px,rgba(255,255,255,0.062) 456.9px,rgba(255,255,255,0.003) 456.9px,rgba(255,255,255,0.003) 457.3px,rgba(255,255,255,0.056) 457.3px,rgba(255,255,255,0.056) 458.1px,rgba(0,0,0,0.020) 458.1px,rgba(0,0,0,0.020) 458.6px,rgba(0,0,0,0.103) 458.6px,rgba(0,0,0,0.103) 459.9px,rgba(255,255,255,0.010) 459.9px,rgba(255,255,255,0.010) 460.9px,rgba(255,255,255,0.106) 460.9px,rgba(255,255,255,0.106) 461.4px,rgba(255,255,255,0.107) 461.4px,rgba(255,255,255,0.107) 461.8px,rgba(255,255,255,0.027) 461.8px,rgba(255,255,255,0.027) 462.4px,rgba(0,0,0,0.089) 462.4px,rgba(0,0,0,0.089) 462.9px,rgba(255,255,255,0.107) 462.9px,rgba(255,255,255,0.107) 463.7px,rgba(0,0,0,0.072) 463.7px,rgba(0,0,0,0.072) 464.5px,rgba(0,0,0,0.018) 464.5px,rgba(0,0,0,0.018) 465.0px,rgba(255,255,255,0.086) 465.0px,rgba(255,255,255,0.086) 466.0px,rgba(255,255,255,0.055) 466.0px,rgba(255,255,255,0.055) 466.5px,rgba(255,255,255,0.060) 466.5px,rgba(255,255,255,0.060) 468.2px,rgba(0,0,0,0.083) 468.2px,rgba(0,0,0,0.083) 469.9px,rgba(0,0,0,0.045) 469.9px,rgba(0,0,0,0.045) 471.6px,rgba(255,255,255,0.015) 471.6px,rgba(255,255,255,0.015) 472.2px,rgba(0,0,0,0.054) 472.2px,rgba(0,0,0,0.054) 472.8px,rgba(0,0,0,0.066) 472.8px,rgba(0,0,0,0.066) 473.4px,rgba(0,0,0,0.069) 473.4px,rgba(0,0,0,0.069) 473.9px,rgba(0,0,0,0.076) 473.9px,rgba(0,0,0,0.076) 474.4px,rgba(0,0,0,0.069) 474.4px,rgba(0,0,0,0.069) 475.4px,rgba(0,0,0,0.023) 475.4px,rgba(0,0,0,0.023) 475.8px,rgba(255,255,255,0.002) 475.8px,rgba(255,255,255,0.002) 476.3px,rgba(255,255,255,0.033) 476.3px,rgba(255,255,255,0.033) 476.8px,rgba(255,255,255,0.034) 476.8px,rgba(255,255,255,0.034) 477.2px,rgba(0,0,0,0.087) 477.2px,rgba(0,0,0,0.087) 477.6px,rgba(255,255,255,0.084) 477.6px,rgba(255,255,255,0.084) 478.4px,rgba(255,255,255,0.075) 478.4px,rgba(255,255,255,0.075) 478.9px,rgba(0,0,0,0.101) 478.9px,rgba(0,0,0,0.101) 479.5px,rgba(0,0,0,0.059) 479.5px,rgba(0,0,0,0.059) 480.1px,rgba(0,0,0,0.068) 480.1px,rgba(0,0,0,0.068) 480.5px,rgba(255,255,255,0.018) 480.5px,rgba(255,255,255,0.018) 482.2px,rgba(0,0,0,0.028) 482.2px,rgba(0,0,0,0.028) 482.6px,rgba(0,0,0,0.071) 482.6px,rgba(0,0,0,0.071) 484.3px,rgba(0,0,0,0.053) 484.3px,rgba(0,0,0,0.053) 485.3px,rgba(255,255,255,0.036) 485.3px,rgba(255,255,255,0.036) 487.0px,rgba(0,0,0,0.087) 487.0px,rgba(0,0,0,0.087) 487.4px,rgba(255,255,255,0.046) 487.4px,rgba(255,255,255,0.046) 488.4px,rgba(0,0,0,0.062) 488.4px,rgba(0,0,0,0.062) 489.0px,rgba(0,0,0,0.035) 489.0px,rgba(0,0,0,0.035) 489.6px,rgba(0,0,0,0.065) 489.6px,rgba(0,0,0,0.065) 490.0px,rgba(0,0,0,0.102) 490.0px,rgba(0,0,0,0.102) 490.6px,rgba(255,255,255,0.033) 490.6px,rgba(255,255,255,0.033) 491.9px,rgba(255,255,255,0.069) 491.9px,rgba(255,255,255,0.069) 492.4px,rgba(0,0,0,0.038) 492.4px,rgba(0,0,0,0.038) 494.1px,rgba(0,0,0,0.028) 494.1px,rgba(0,0,0,0.028) 495.4px,rgba(0,0,0,0.041) 495.4px,rgba(0,0,0,0.041) 496.4px,rgba(0,0,0,0.103) 496.4px,rgba(0,0,0,0.103) 496.9px,rgba(255,255,255,0.011) 496.9px,rgba(255,255,255,0.011) 497.7px,rgba(0,0,0,0.020) 497.7px,rgba(0,0,0,0.020) 498.1px,rgba(0,0,0,0.023) 498.1px,rgba(0,0,0,0.023) 499.8px,rgba(0,0,0,0.076) 499.8px,rgba(0,0,0,0.076) 500.8px,rgba(0,0,0,0.090) 500.8px,rgba(0,0,0,0.090) 501.8px,rgba(0,0,0,0.022) 501.8px,rgba(0,0,0,0.022) 502.3px,rgba(0,0,0,0.020) 502.3px,rgba(0,0,0,0.020) 502.9px,rgba(255,255,255,0.037) 502.9px,rgba(255,255,255,0.037) 503.5px,rgba(255,255,255,0.100) 503.5px,rgba(255,255,255,0.100) 504.3px,rgba(255,255,255,0.054) 504.3px,rgba(255,255,255,0.054) 504.9px,rgba(0,0,0,0.019) 504.9px,rgba(0,0,0,0.019) 505.5px,rgba(255,255,255,0.080) 505.5px,rgba(255,255,255,0.080) 505.9px,rgba(0,0,0,0.030) 505.9px,rgba(0,0,0,0.030) 507.6px,rgba(0,0,0,0.024) 507.6px,rgba(0,0,0,0.024) 508.1px,rgba(0,0,0,0.065) 508.1px,rgba(0,0,0,0.065) 508.9px,rgba(0,0,0,0.014) 508.9px,rgba(0,0,0,0.014) 509.3px,rgba(0,0,0,0.017) 509.3px,rgba(0,0,0,0.017) 509.8px,rgba(0,0,0,0.090) 509.8px,rgba(0,0,0,0.090) 511.5px,rgba(255,255,255,0.084) 511.5px,rgba(255,255,255,0.084) 512.5px,rgba(255,255,255,0.060) 512.5px,rgba(255,255,255,0.060) 513.3px,rgba(0,0,0,0.107) 513.3px,rgba(0,0,0,0.107) 513.8px,rgba(0,0,0,0.079) 513.8px,rgba(0,0,0,0.079) 514.8px,rgba(255,255,255,0.090) 514.8px,rgba(255,255,255,0.090) 516.5px,rgba(255,255,255,0.016) 516.5px,rgba(255,255,255,0.016) 516.9px,rgba(255,255,255,0.052) 516.9px,rgba(255,255,255,0.052) 517.5px,rgba(0,0,0,0.078) 517.5px,rgba(0,0,0,0.078) 518.0px,rgba(0,0,0,0.074) 518.0px,rgba(0,0,0,0.074) 518.6px,rgba(255,255,255,0.094) 518.6px,rgba(255,255,255,0.094) 519.1px,rgba(0,0,0,0.026) 519.1px,rgba(0,0,0,0.026) 519.5px,rgba(255,255,255,0.067) 519.5px,rgba(255,255,255,0.067) 521.2px,rgba(0,0,0,0.067) 521.2px,rgba(0,0,0,0.067) 522.9px,rgba(255,255,255,0.074) 522.9px,rgba(255,255,255,0.074) 523.4px,rgba(255,255,255,0.105) 523.4px,rgba(255,255,255,0.105) 523.8px,rgba(0,0,0,0.041) 523.8px,rgba(0,0,0,0.041) 524.6px,rgba(255,255,255,0.094) 524.6px,rgba(255,255,255,0.094) 525.6px,rgba(0,0,0,0.091) 525.6px,rgba(0,0,0,0.091) 526.4px,rgba(255,255,255,0.026) 526.4px,rgba(255,255,255,0.026) 527.7px,rgba(255,255,255,0.086) 527.7px,rgba(255,255,255,0.086) 529.4px,rgba(255,255,255,0.063) 529.4px,rgba(255,255,255,0.063) 530.7px,rgba(255,255,255,0.027) 530.7px,rgba(255,255,255,0.027) 531.2px,rgba(255,255,255,0.076) 531.2px,rgba(255,255,255,0.076) 532.2px,rgba(0,0,0,0.006) 532.2px,rgba(0,0,0,0.006) 533.9px,rgba(0,0,0,0.062) 533.9px,rgba(0,0,0,0.062) 534.9px,rgba(255,255,255,0.096) 534.9px,rgba(255,255,255,0.096) 535.7px,rgba(0,0,0,0.026) 535.7px,rgba(0,0,0,0.026) 536.2px,rgba(0,0,0,0.077) 536.2px,rgba(0,0,0,0.077) 536.6px,rgba(255,255,255,0.069) 536.6px,rgba(255,255,255,0.069) 537.9px,rgba(0,0,0,0.101) 537.9px,rgba(0,0,0,0.101) 538.4px,rgba(255,255,255,0.075) 538.4px,rgba(255,255,255,0.075) 539.4px,rgba(0,0,0,0.102) 539.4px,rgba(0,0,0,0.102) 540.7px,rgba(0,0,0,0.039) 540.7px,rgba(0,0,0,0.039) 542.4px,rgba(255,255,255,0.022) 542.4px,rgba(255,255,255,0.022) 543.2px,rgba(255,255,255,0.077) 543.2px,rgba(255,255,255,0.077) 544.2px,rgba(0,0,0,0.043) 544.2px,rgba(0,0,0,0.043) 545.9px,rgba(0,0,0,0.042) 545.9px,rgba(0,0,0,0.042) 546.7px,rgba(0,0,0,0.016) 546.7px,rgba(0,0,0,0.016) 547.2px,rgba(0,0,0,0.029) 547.2px,rgba(0,0,0,0.029) 548.5px,rgba(0,0,0,0.014) 548.5px,rgba(0,0,0,0.014) 549.5px,rgba(0,0,0,0.109) 549.5px,rgba(0,0,0,0.109) 549.9px,rgba(0,0,0,0.008) 549.9px,rgba(0,0,0,0.008) 550.7px,rgba(255,255,255,0.058) 550.7px,rgba(255,255,255,0.058) 551.5px,rgba(255,255,255,0.070) 551.5px,rgba(255,255,255,0.070) 553.2px,rgba(0,0,0,0.070) 553.2px,rgba(0,0,0,0.070) 554.9px,rgba(0,0,0,0.022) 554.9px,rgba(0,0,0,0.022) 555.7px,rgba(0,0,0,0.082) 555.7px,rgba(0,0,0,0.082) 556.1px,rgba(0,0,0,0.030) 556.1px,rgba(0,0,0,0.030) 556.9px,rgba(0,0,0,0.013) 556.9px,rgba(0,0,0,0.013) 558.6px,rgba(255,255,255,0.035) 558.6px,rgba(255,255,255,0.035) 559.6px,rgba(255,255,255,0.030) 559.6px,rgba(255,255,255,0.030) 560.0px,rgba(255,255,255,0.093) 560.0px,rgba(255,255,255,0.093) 560.4px,rgba(255,255,255,0.061) 560.4px,rgba(255,255,255,0.061) 561.0px,rgba(0,0,0,0.092) 561.0px,rgba(0,0,0,0.092) 562.0px,rgba(255,255,255,0.001) 562.0px,rgba(255,255,255,0.001) 563.7px,rgba(255,255,255,0.034) 563.7px,rgba(255,255,255,0.034) 564.5px,rgba(0,0,0,0.080) 564.5px,rgba(0,0,0,0.080) 566.2px,rgba(0,0,0,0.095) 566.2px,rgba(0,0,0,0.095) 567.9px,rgba(255,255,255,0.051) 567.9px,rgba(255,255,255,0.051) 568.9px,rgba(0,0,0,0.086) 568.9px,rgba(0,0,0,0.086) 570.6px,rgba(255,255,255,0.106) 570.6px,rgba(255,255,255,0.106) 571.1px,rgba(0,0,0,0.047) 571.1px,rgba(0,0,0,0.047) 571.9px,rgba(255,255,255,0.092) 571.9px,rgba(255,255,255,0.092) 573.6px,rgba(255,255,255,0.041) 573.6px,rgba(255,255,255,0.041) 574.1px,rgba(255,255,255,0.095) 574.1px,rgba(255,255,255,0.095) 575.4px,rgba(255,255,255,0.073) 575.4px,rgba(255,255,255,0.073) 575.8px,rgba(255,255,255,0.056) 575.8px,rgba(255,255,255,0.056) 576.8px,rgba(0,0,0,0.039) 576.8px,rgba(0,0,0,0.039) 577.3px,rgba(0,0,0,0.050) 577.3px,rgba(0,0,0,0.050) 578.3px,rgba(0,0,0,0.010) 578.3px,rgba(0,0,0,0.010) 580.0px,rgba(255,255,255,0.000) 580.0px,rgba(255,255,255,0.000) 580.6px,rgba(0,0,0,0.064) 580.6px,rgba(0,0,0,0.064) 581.4px,rgba(255,255,255,0.025) 581.4px,rgba(255,255,255,0.025) 582.0px,rgba(0,0,0,0.040) 582.0px,rgba(0,0,0,0.040) 582.5px,rgba(0,0,0,0.066) 582.5px,rgba(0,0,0,0.066) 582.9px,rgba(0,0,0,0.075) 582.9px,rgba(0,0,0,0.075) 583.7px,rgba(255,255,255,0.040) 583.7px,rgba(255,255,255,0.040) 584.3px,rgba(0,0,0,0.073) 584.3px,rgba(0,0,0,0.073) 585.1px,rgba(0,0,0,0.052) 585.1px,rgba(0,0,0,0.052) 586.8px,rgba(255,255,255,0.007) 586.8px,rgba(255,255,255,0.007) 588.5px,rgba(255,255,255,0.079) 588.5px,rgba(255,255,255,0.079) 589.8px,rgba(0,0,0,0.010) 589.8px,rgba(0,0,0,0.010) 591.5px,rgba(255,255,255,0.018) 591.5px,rgba(255,255,255,0.018) 592.5px,rgba(0,0,0,0.055) 592.5px,rgba(0,0,0,0.055) 592.9px,rgba(255,255,255,0.029) 592.9px,rgba(255,255,255,0.029) 593.9px,rgba(255,255,255,0.052) 593.9px,rgba(255,255,255,0.052) 594.7px,rgba(0,0,0,0.052) 594.7px,rgba(0,0,0,0.052) 595.3px,rgba(255,255,255,0.017) 595.3px,rgba(255,255,255,0.017) 595.9px,rgba(0,0,0,0.037) 595.9px,rgba(0,0,0,0.037) 596.5px,rgba(0,0,0,0.013) 596.5px,rgba(0,0,0,0.013) 596.9px,rgba(255,255,255,0.025) 596.9px,rgba(255,255,255,0.025) 597.4px,rgba(0,0,0,0.045) 597.4px,rgba(0,0,0,0.045) 597.8px,rgba(0,0,0,0.054) 597.8px,rgba(0,0,0,0.054) 598.8px,rgba(255,255,255,0.103) 598.8px,rgba(255,255,255,0.103) 600.1px,rgba(255,255,255,0.019) 600.1px,rgba(255,255,255,0.019) 601.8px,rgba(255,255,255,0.087) 601.8px,rgba(255,255,255,0.087) 603.1px,rgba(0,0,0,0.110) 603.1px,rgba(0,0,0,0.110) 604.4px,rgba(0,0,0,0.061) 604.4px,rgba(0,0,0,0.061) 604.8px,rgba(255,255,255,0.026) 604.8px,rgba(255,255,255,0.026) 605.4px,rgba(0,0,0,0.018) 605.4px,rgba(0,0,0,0.018) 606.2px,rgba(255,255,255,0.087) 606.2px,rgba(255,255,255,0.087) 606.8px,rgba(0,0,0,0.003) 606.8px,rgba(0,0,0,0.003) 607.3px,rgba(255,255,255,0.034) 607.3px,rgba(255,255,255,0.034) 608.3px,rgba(0,0,0,0.098) 608.3px,rgba(0,0,0,0.098) 608.7px,rgba(0,0,0,0.032) 608.7px,rgba(0,0,0,0.032) 609.7px,rgba(255,255,255,0.005) 609.7px,rgba(255,255,255,0.005) 610.1px,rgba(0,0,0,0.061) 610.1px,rgba(0,0,0,0.061) 611.1px,rgba(0,0,0,0.044) 611.1px,rgba(0,0,0,0.044) 612.1px,rgba(0,0,0,0.065) 612.1px,rgba(0,0,0,0.065) 612.6px,rgba(255,255,255,0.072) 612.6px,rgba(255,255,255,0.072) 613.6px,rgba(0,0,0,0.080) 613.6px,rgba(0,0,0,0.080) 614.1px,rgba(0,0,0,0.056) 614.1px,rgba(0,0,0,0.056) 615.8px,rgba(0,0,0,0.011) 615.8px,rgba(0,0,0,0.011) 616.3px,rgba(255,255,255,0.030) 616.3px,rgba(255,255,255,0.030) 616.7px,rgba(255,255,255,0.036) 616.7px,rgba(255,255,255,0.036) 618.4px,rgba(0,0,0,0.022) 618.4px,rgba(0,0,0,0.022) 619.0px,rgba(255,255,255,0.103) 619.0px,rgba(255,255,255,0.103) 619.6px,rgba(255,255,255,0.032) 619.6px,rgba(255,255,255,0.032) 620.0px),linear-gradient(#929292,#7c7c7c 8%,#767676 45%,#717171 90%,#5e5e5e 100%);"></div>
<div style="left:16.30px;top:21.40px;width:5.20px;height:5.20px;border-radius:50%;background:radial-gradient(circle at 50% 30%,#fff8 0,#fff0 38%),radial-gradient(circle at 50% 40%,#f0504a,#c8302c);"></div>
<div style="left:24.90px;top:21.40px;width:5.20px;height:5.20px;border-radius:50%;background:radial-gradient(circle at 50% 30%,#fff8 0,#fff0 38%),radial-gradient(circle at 50% 40%,#f3b03a,#d18a1a);"></div>
<div style="left:33.30px;top:21.40px;width:5.20px;height:5.20px;border-radius:50%;background:radial-gradient(circle at 50% 30%,#fff8 0,#fff0 38%),radial-gradient(circle at 50% 40%,#62c24a,#3c9a2a);"></div>
<svg style="left:40px;top:20px" width="100" height="12" viewBox="40 20 100 12"><path d="M43.5 31.4 C46 31 46.5 21.4 50 21.4 L125.5 21.4 C129 21.4 129.5 31 132.5 31.4 Z" fill="#e8d7b0"/><path d="M130.5 23.4 L142 23.4 Q143.2 23.4 143.6 24.4 L145 28.6 Q145.3 29.6 144 29.6 L133.5 29.6 Q132.4 29.6 132 28.6 L130.3 24.2 Q130 23.4 130.5 23.4 Z" fill="#c6c6c6" stroke="#8a8a8a" stroke-width="0.4"/><path d="M50.6 23.4 L54.4 28.8 M54.4 23.4 L50.6 28.8" stroke="#1e9e55" stroke-width="1.1"/><path d="M120.6 24.8 L123 27.4 M123 24.8 L120.6 27.4" stroke="#444" stroke-width="0.55"/></svg>
<div class="t" style="font-size:4.4px;line-height:5.28px;top:23.56px;letter-spacing:0.090px;left:57.00px;font-family:'DejaVu Sans','Liberation Sans',sans-serif;color:#4e4e4e;-webkit-text-stroke:0;">LemonadeStand.xlsx</div>
<svg style="left:616px;top:19px" width="8" height="8" viewBox="0 0 8 8"><path d="M1 7 L3.4 4.6 M1 7 V5.2 M1 7 H2.8 M7 1 L4.6 3.4 M7 1 V2.8 M7 1 H5.2" stroke="#4a4a4a" stroke-width="0.7" fill="none"/></svg>
<div style="left:11.30px;top:31.20px;width:616.30px;height:15.80px;background:linear-gradient(#e8d7b0,#ead9b3 80%,#e2d0a6 92%,#d6c396);"></div>
<div style="left:62.80px;top:33.40px;width:442.20px;height:10.70px;background:#fff;border-radius:1px;box-shadow:0 0 0.6px #b9a77c;"></div>
<svg style="left:11px;top:31px" width="617" height="16" viewBox="11 31 617 16"><path d="M16.2 38.8 H21.4 M16.2 38.8 L18.4 36.6 M16.2 38.8 L18.4 41" stroke="#c5b799" stroke-width="0.9" fill="none"/><path d="M33.6 38.8 H28.4 M33.6 38.8 L31.4 36.6 M33.6 38.8 L31.4 41" stroke="#c5b799" stroke-width="0.9" fill="none"/><path d="M44.9 37.4 A2.3 2.3 0 1 0 45.2 39.9" stroke="#3c4450" stroke-width="1" fill="none"/><path d="M43.6 37.9 L46 37.9 L46 35.6 Z" fill="#3c4450"/><path d="M52.2 39 L55 36.2 L57.8 39 H56.9 V41.4 H55.7 V39.7 H54.3 V41.4 H53.1 V39 Z" fill="#4a4f58"/><path d="M66.4 35.4 H69.6 L71 36.8 V41.8 H66.4 Z" fill="#f4f4f4" stroke="#bdbdbd" stroke-width="0.5"/><path d="M499.7 35.3 L500.7 37.6 L503.2 37.8 L501.3 39.4 L501.9 41.9 L499.7 40.5 L497.5 41.9 L498.1 39.4 L496.2 37.8 L498.7 37.6 Z" fill="none" stroke="#8a8a8a" stroke-width="0.55"/><rect x="510.4" y="37" width="5.9" height="4.2" rx="0.5" fill="#f8c93c"/><path d="M511.5 37.4 V36.6 Q513.3 33.8 515.1 36.6 V37.4 Z" fill="#f8c93c"/><rect x="523.2" y="34.8" width="7.8" height="7.4" rx="1" fill="#c4161c"/><path d="M527.1 36.2 V40.8 M525.1 37.3 L529.1 39.7 M529.1 37.3 L525.1 39.7" stroke="#fff" stroke-width="1.1"/><rect x="537" y="34.8" width="6.4" height="7.2" fill="#e2523a"/><rect x="537" y="34.8" width="1.2" height="7.2" fill="#6d7f9a"/><rect x="537" y="41.6" width="6.4" height="0.9" fill="#f0b84a"/><path d="M553.7 34.8 L556 38.8 L551.4 38.8 Z" fill="#f4c430"/><path d="M553.7 34.8 L552.4 34.8 L549.6 39.8 L550.9 42 Z" fill="#1fa463"/><path d="M551 42 L552.3 39.6 L557.6 39.6 L556.3 42 Z" fill="#4688f4"/><path d="M553.7 34.8 H552.4 L555 39.6 H557.6 Z" fill="#f4c430"/><circle cx="567" cy="38.6" r="3.5" fill="#d9d9d9" stroke="#bdbdbd" stroke-width="0.5"/><rect x="565.2" y="37.6" width="3.6" height="2.2" fill="#f6f6f6"/><rect x="576.3" y="35" width="3.7" height="3.7" fill="#4a8af4"/><rect x="580" y="35" width="3.7" height="3.7" fill="#e04a3a"/><rect x="576.3" y="38.7" width="3.7" height="3.7" fill="#f4c20d"/><rect x="580" y="38.7" width="3.7" height="3.7" fill="#2da94f"/><path d="M578 41 L582 36.8" stroke="#e0923c" stroke-width="1.9" stroke-linecap="round"/><circle cx="582.4" cy="36.4" r="0.8" fill="#222"/><rect x="589.8" y="36" width="6.6" height="5" fill="none" stroke="#8a8577" stroke-width="0.7"/><path d="M589.6 41.2 Q590.8 40 591.6 41.2" stroke="#8a8577" stroke-width="0.6" fill="none"/><rect x="603.2" y="36.2" width="6.8" height="4.8" fill="#f6f3ea"/><path d="M603.7 41 V36.6 L606.6 39.2 L609.5 36.6 V41" stroke="#2f7de1" stroke-width="1.2" fill="none"/><path d="M617 36.5 H623.3 M617 38.6 H623.3 M617 40.6 H623.3" stroke="#20242c" stroke-width="1.15"/></svg>
<div class="t" style="font-size:5.9px;line-height:7.08px;top:35.36px;letter-spacing:0.070px;left:74.60px;font-family:'DejaVu Sans','Liberation Sans',sans-serif;color:#444;-webkit-text-stroke:0.05px;"><span style="color:#6a6a6a">chrome-extension://</span>ehibbfinohgbchlgdbfpikodjaojhccn<span style="color:#6a6a6a">/views/app.html</span></div>
<div style="left:11.30px;top:46.90px;width:616.30px;height:342.90px;background:#fff;"></div>
<div style="left:11.30px;top:46.90px;width:17.50px;height:25.40px;background:#1a9c58;"></div>
<svg style="left:15px;top:54px" width="10" height="10" viewBox="15 54 10 10"><path d="M16.8 55.2 L22.6 63.6 M22.6 55.2 L16.8 63.6" stroke="#fff" stroke-width="1.5"/><path d="M16.5 63.3 H20" stroke="#fff" stroke-width="0.7"/></svg>
<div class="t" style="font-size:7.6px;line-height:9.12px;top:50.14px;letter-spacing:0.071px;left:36.90px;color:#2b2b2b;">LemonadeStand.xlsx</div>
<div class="t" style="font-size:5.7px;line-height:6.84px;top:61.98px;letter-spacing:0.082px;left:36.90px;color:#1c1c1c;">File</div>
<div class="t" style="font-size:5.7px;line-height:6.84px;top:61.98px;letter-spacing:0.047px;left:53.00px;color:#1c1c1c;">Edit</div>
<div class="t" style="font-size:5.7px;line-height:6.84px;top:61.98px;letter-spacing:0.044px;left:69.80px;color:#1c1c1c;">Insert</div>
<div class="t" style="font-size:5.7px;line-height:6.84px;top:61.98px;letter-spacing:-0.136px;left:90.60px;color:#1c1c1c;">Format</div>
<div class="t" style="font-size:5.7px;line-height:6.84px;top:61.98px;letter-spacing:-0.126px;left:115.00px;color:#1c1c1c;">Help</div>
<div style="left:573.80px;top:52.90px;width:31.00px;height:12.50px;background:#4b8df8;border-radius:0.8px;border:0.4px solid #3b7be6;"></div>
<svg style="left:578px;top:55px" width="6" height="8" viewBox="578 55 6 8"><rect x="579" y="58.2" width="3.6" height="3" fill="#fff"/><path d="M579.8 58.2 V57.4 Q580.8 56 581.8 57.4 V58.2" stroke="#fff" stroke-width="0.6" fill="none"/></svg>
<div class="t" style="font-size:5.1px;line-height:6.12px;top:56.14px;left:586.20px;color:#fff;font-weight:bold;">Share</div>
<div style="left:11.30px;top:72.40px;width:616.30px;height:16.20px;background:linear-gradient(#f5f5f5,#f0f0f0 60%,#eeeeee 94%,#dedede);border-top:0.5px solid #e4e4e4;"></div>
<div style="left:60.35px;top:73.40px;width:0.60px;height:14.00px;background:#e0e0e0;"></div>
<div style="left:87.15px;top:73.40px;width:0.60px;height:14.00px;background:#e0e0e0;"></div>
<div style="left:135.35px;top:73.40px;width:0.60px;height:14.00px;background:#e0e0e0;"></div>
<div style="left:159.25px;top:73.40px;width:0.60px;height:14.00px;background:#e0e0e0;"></div>
<div style="left:213.75px;top:73.40px;width:0.60px;height:14.00px;background:#e0e0e0;"></div>
<div style="left:234.75px;top:73.40px;width:0.60px;height:14.00px;background:#e0e0e0;"></div>
<svg style="left:30px;top:73px" width="230" height="15" viewBox="30 73 230 15"><path d="M39.2 81 Q41 77.8 44.2 80.2" stroke="#b8b8b8" stroke-width="0.9" fill="none"/><path d="M38.7 79.4 L38.9 81.4 L40.9 81" stroke="#b8b8b8" stroke-width="0.7" fill="none"/><path d="M55.8 81 Q54 77.8 50.8 80.2" stroke="#b8b8b8" stroke-width="0.9" fill="none"/><path d="M56.3 79.4 L56.1 81.4 L54.1 81" stroke="#b8b8b8" stroke-width="0.7" fill="none"/><circle cx="67" cy="79.6" r="1.9" fill="none" stroke="#2c2c2c" stroke-width="0.95"/><path d="M68.4 81.1 L70.5 83.2" stroke="#2c2c2c" stroke-width="1.25"/><path d="M66 79.6 H68 M67 78.6 V80.6" stroke="#333" stroke-width="0.5"/><circle cx="78.4" cy="79.6" r="1.9" fill="none" stroke="#2c2c2c" stroke-width="0.95"/><path d="M79.8 81.1 L81.9 83.2" stroke="#2c2c2c" stroke-width="1.25"/><path d="M77.4 79.6 H79.4" stroke="#333" stroke-width="0.5"/><path d="M127.6 80 H129.6 L128.6 81.1 Z" fill="#333"/><path d="M151.6 80 H153.6 L152.6 81.1 Z" fill="#333"/><path d="M206 80 H208 L207 81.1 Z" fill="#333"/><path d="M227 80 H229 L228 81.1 Z" fill="#333"/><path d="M248.3 80 H250.3 L249.3 81.1 Z" fill="#333"/><rect x="197" y="83.2" width="5.6" height="1.1" fill="#333"/><rect x="218.2" y="77" width="6" height="5" fill="#3c3c3c"/><rect x="218" y="82.4" width="6.4" height="2" fill="#fff"/><path d="M220 81.6 L221.1 78.4 L222.2 81.6" stroke="#ddd" stroke-width="0.5" fill="none"/><path d="M238.8 78.2 H245 M238.8 79.7 H243.4 M238.8 81.2 H245 M238.8 82.7 H243.4" stroke="#2e2e2e" stroke-width="0.95"/></svg>
<div class="t" style="font-size:4.4px;line-height:5.28px;top:77.66px;letter-spacing:0.379px;left:92.00px;color:#222;font-weight:bold;-webkit-text-stroke:0.2px;">Garamond</div>
<div class="t" style="font-size:4.4px;line-height:5.28px;top:77.66px;left:141.00px;color:#222;font-weight:bold;-webkit-text-stroke:0.2px;">18</div>
<div class="t" style="font-size:5px;line-height:6.00px;top:77.30px;left:165.40px;color:#222;font-weight:bold;">B</div>
<div class="t" style="font-size:5px;line-height:6.00px;top:77.30px;left:177.20px;color:#222;font-weight:bold;font-style:italic;">I</div>
<div class="t" style="font-size:4.8px;line-height:5.76px;top:78.02px;left:187.80px;color:#333;text-decoration:underline;">U</div>
<div class="t" style="font-size:4.8px;line-height:5.76px;top:77.62px;left:198.20px;color:#333;">A</div>
<div style="left:11.30px;top:88.60px;width:616.30px;height:11.20px;background:#f3f3f3;"></div>
<div style="left:27.40px;top:89.90px;width:595.40px;height:8.30px;background:#fff;border-top:0.4px solid #e2e2e2;border-bottom:0.5px solid #d6d6d6;"></div>
<div class="t" style="font-size:6px;line-height:7.20px;top:90.20px;left:15.60px;color:#555;font-family:'Liberation Serif',serif;"><i>f</i></div>
<div class="t" style="font-size:3.2px;line-height:3.84px;top:90.68px;left:18.60px;color:#666;">(x</div>
<div class="t" style="font-size:5.9px;line-height:7.08px;top:90.26px;letter-spacing:0.299px;left:29.60px;color:#1a1a1a;">"The best lemonade stand in Mountain View"</div>
<div style="left:11.30px;top:99.00px;width:610.90px;height:7.70px;background:#ececec;border-top:0.6px solid #d6d6d6;"></div>
<div style="left:27.40px;top:99.60px;width:28.90px;height:7.00px;background:#c6c6c6;"></div>
<div style="left:11.30px;top:106.50px;width:16.10px;height:267.25px;background:#f1f1f1;border-right:0.5px solid #cfcfcf;"></div>
<div style="left:11.30px;top:129.50px;width:16.10px;height:10.50px;background:#c9c9c9;"></div>
<svg style="left:0;top:0" width="640" height="400" viewBox="0 0 640 400"><path d="M56.30 99.3 V106.6" stroke="#cdcdcd" stroke-width="0.6"/><path d="M56.30 106.5 V373.75" stroke="#dedede" stroke-width="0.7"/><path d="M105.50 99.3 V106.6" stroke="#cdcdcd" stroke-width="0.6"/><path d="M105.50 106.5 V373.75" stroke="#dedede" stroke-width="0.7"/><path d="M169.90 99.3 V106.6" stroke="#cdcdcd" stroke-width="0.6"/><path d="M169.90 106.5 V373.75" stroke="#dedede" stroke-width="0.7"/><path d="M218.90 99.3 V106.6" stroke="#cdcdcd" stroke-width="0.6"/><path d="M218.90 106.5 V373.75" stroke="#dedede" stroke-width="0.7"/><path d="M267.80 99.3 V106.6" stroke="#cdcdcd" stroke-width="0.6"/><path d="M267.80 106.5 V373.75" stroke="#dedede" stroke-width="0.7"/><path d="M316.80 99.3 V106.6" stroke="#cdcdcd" stroke-width="0.6"/><path d="M316.80 106.5 V373.75" stroke="#dedede" stroke-width="0.7"/><path d="M349.50 99.3 V106.6" stroke="#cdcdcd" stroke-width="0.6"/><path d="M349.50 106.5 V373.75" stroke="#dedede" stroke-width="0.7"/><path d="M382.30 99.3 V106.6" stroke="#cdcdcd" stroke-width="0.6"/><path d="M382.30 106.5 V373.75" stroke="#dedede" stroke-width="0.7"/><path d="M414.80 99.3 V106.6" stroke="#cdcdcd" stroke-width="0.6"/><path d="M414.80 106.5 V373.75" stroke="#dedede" stroke-width="0.7"/><path d="M447.50 99.3 V106.6" stroke="#cdcdcd" stroke-width="0.6"/><path d="M447.50 106.5 V373.75" stroke="#dedede" stroke-width="0.7"/><path d="M480.10 99.3 V106.6" stroke="#cdcdcd" stroke-width="0.6"/><path d="M480.10 106.5 V373.75" stroke="#dedede" stroke-width="0.7"/><path d="M512.60 99.3 V106.6" stroke="#cdcdcd" stroke-width="0.6"/><path d="M512.60 106.5 V373.75" stroke="#dedede" stroke-width="0.7"/><path d="M545.20 99.3 V106.6" stroke="#cdcdcd" stroke-width="0.6"/><path d="M545.20 106.5 V373.75" stroke="#dedede" stroke-width="0.7"/><path d="M577.80 99.3 V106.6" stroke="#cdcdcd" stroke-width="0.6"/><path d="M577.80 106.5 V373.75" stroke="#dedede" stroke-width="0.7"/><path d="M610.60 99.3 V106.6" stroke="#cdcdcd" stroke-width="0.6"/><path d="M610.60 106.5 V373.75" stroke="#dedede" stroke-width="0.7"/><path d="M11.30 129.50 H27.40" stroke="#d0d0d0" stroke-width="0.6"/><path d="M27.40 129.50 H622.20" stroke="#dedede" stroke-width="0.7"/><path d="M11.30 140.00 H27.40" stroke="#d0d0d0" stroke-width="0.6"/><path d="M27.40 140.00 H622.20" stroke="#dedede" stroke-width="0.7"/><path d="M11.30 146.60 H27.40" stroke="#d0d0d0" stroke-width="0.6"/><path d="M27.40 146.60 H622.20" stroke="#dedede" stroke-width="0.7"/><path d="M11.30 167.70 H27.40" stroke="#d0d0d0" stroke-width="0.6"/><path d="M27.40 167.70 H622.20" stroke="#dedede" stroke-width="0.7"/><path d="M11.30 174.00 H27.40" stroke="#d0d0d0" stroke-width="0.6"/><path d="M27.40 174.00 H622.20" stroke="#dedede" stroke-width="0.7"/><path d="M11.30 180.30 H27.40" stroke="#d0d0d0" stroke-width="0.6"/><path d="M27.40 180.30 H622.20" stroke="#dedede" stroke-width="0.7"/><path d="M11.30 186.60 H27.40" stroke="#d0d0d0" stroke-width="0.6"/><path d="M27.40 186.60 H622.20" stroke="#dedede" stroke-width="0.7"/><path d="M11.30 192.90 H27.40" stroke="#d0d0d0" stroke-width="0.6"/><path d="M27.40 192.90 H622.20" stroke="#dedede" stroke-width="0.7"/><path d="M11.30 199.20 H27.40" stroke="#d0d0d0" stroke-width="0.6"/><path d="M27.40 199.20 H622.20" stroke="#dedede" stroke-width="0.7"/><path d="M11.30 205.50 H27.40" stroke="#d0d0d0" stroke-width="0.6"/><path d="M27.40 205.50 H622.20" stroke="#dedede" stroke-width="0.7"/><path d="M11.30 211.80 H27.40" stroke="#d0d0d0" stroke-width="0.6"/><path d="M27.40 211.80 H622.20" stroke="#dedede" stroke-width="0.7"/><path d="M11.30 218.10 H27.40" stroke="#d0d0d0" stroke-width="0.6"/><path d="M27.40 218.10 H622.20" stroke="#dedede" stroke-width="0.7"/><path d="M11.30 224.40 H27.40" stroke="#d0d0d0" stroke-width="0.6"/><path d="M27.40 224.40 H622.20" stroke="#dedede" stroke-width="0.7"/><path d="M11.30 230.70 H27.40" stroke="#d0d0d0" stroke-width="0.6"/><path d="M27.40 230.70 H622.20" stroke="#dedede" stroke-width="0.7"/><path d="M11.30 237.00 H27.40" stroke="#d0d0d0" stroke-width="0.6"/><path d="M27.40 237.00 H622.20" stroke="#dedede" stroke-width="0.7"/><path d="M11.30 243.30 H27.40" stroke="#d0d0d0" stroke-width="0.6"/><path d="M27.40 243.30 H622.20" stroke="#dedede" stroke-width="0.7"/><path d="M11.30 249.60 H27.40" stroke="#d0d0d0" stroke-width="0.6"/><path d="M27.40 249.60 H622.20" stroke="#dedede" stroke-width="0.7"/><path d="M11.30 256.30 H27.40" stroke="#d0d0d0" stroke-width="0.6"/><path d="M27.40 256.30 H622.20" stroke="#dedede" stroke-width="0.7"/><path d="M11.30 265.25 H27.40" stroke="#d0d0d0" stroke-width="0.6"/><path d="M27.40 265.25 H622.20" stroke="#dedede" stroke-width="0.7"/><path d="M11.30 273.00 H27.40" stroke="#d0d0d0" stroke-width="0.6"/><path d="M27.40 273.00 H622.20" stroke="#dedede" stroke-width="0.7"/><path d="M11.30 280.75 H27.40" stroke="#d0d0d0" stroke-width="0.6"/><path d="M27.40 280.75 H622.20" stroke="#dedede" stroke-width="0.7"/><path d="M11.30 288.50 H27.40" stroke="#d0d0d0" stroke-width="0.6"/><path d="M27.40 288.50 H622.20" stroke="#dedede" stroke-width="0.7"/><path d="M11.30 296.25 H27.40" stroke="#d0d0d0" stroke-width="0.6"/><path d="M27.40 296.25 H622.20" stroke="#dedede" stroke-width="0.7"/><path d="M11.30 304.00 H27.40" stroke="#d0d0d0" stroke-width="0.6"/><path d="M27.40 304.00 H622.20" stroke="#dedede" stroke-width="0.7"/><path d="M11.30 311.75 H27.40" stroke="#d0d0d0" stroke-width="0.6"/><path d="M27.40 311.75 H622.20" stroke="#dedede" stroke-width="0.7"/><path d="M11.30 319.50 H27.40" stroke="#d0d0d0" stroke-width="0.6"/><path d="M27.40 319.50 H622.20" stroke="#dedede" stroke-width="0.7"/><path d="M11.30 327.25 H27.40" stroke="#d0d0d0" stroke-width="0.6"/><path d="M27.40 327.25 H622.20" stroke="#dedede" stroke-width="0.7"/><path d="M11.30 335.00 H27.40" stroke="#d0d0d0" stroke-width="0.6"/><path d="M27.40 335.00 H622.20" stroke="#dedede" stroke-width="0.7"/><path d="M11.30 342.75 H27.40" stroke="#d0d0d0" stroke-width="0.6"/><path d="M27.40 342.75 H622.20" stroke="#dedede" stroke-width="0.7"/><path d="M11.30 350.50 H27.40" stroke="#d0d0d0" stroke-width="0.6"/><path d="M27.40 350.50 H622.20" stroke="#dedede" stroke-width="0.7"/><path d="M11.30 358.25 H27.40" stroke="#d0d0d0" stroke-width="0.6"/><path d="M27.40 358.25 H622.20" stroke="#dedede" stroke-width="0.7"/><path d="M11.30 366.00 H27.40" stroke="#d0d0d0" stroke-width="0.6"/><path d="M27.40 366.00 H622.20" stroke="#dedede" stroke-width="0.7"/><path d="M11.30 373.75 H27.40" stroke="#d0d0d0" stroke-width="0.6"/><path d="M27.40 373.75 H622.20" stroke="#dedede" stroke-width="0.7"/></svg>
<div class="t" style="font-size:4.4px;line-height:5.28px;top:100.56px;left:-8.15px;width:100px;text-align:center;color:#3a3a3a;-webkit-text-stroke:0.08px;">A</div>
<div class="t" style="font-size:4.4px;line-height:5.28px;top:100.56px;left:30.90px;width:100px;text-align:center;color:#3a3a3a;-webkit-text-stroke:0.08px;">B</div>
<div class="t" style="font-size:4.4px;line-height:5.28px;top:100.56px;left:87.70px;width:100px;text-align:center;color:#3a3a3a;-webkit-text-stroke:0.08px;">C</div>
<div class="t" style="font-size:4.4px;line-height:5.28px;top:100.56px;left:144.40px;width:100px;text-align:center;color:#3a3a3a;-webkit-text-stroke:0.08px;">D</div>
<div class="t" style="font-size:4.4px;line-height:5.28px;top:100.56px;left:193.35px;width:100px;text-align:center;color:#3a3a3a;-webkit-text-stroke:0.08px;">E</div>
<div class="t" style="font-size:4.4px;line-height:5.28px;top:100.56px;left:242.30px;width:100px;text-align:center;color:#3a3a3a;-webkit-text-stroke:0.08px;">F</div>
<div class="t" style="font-size:4.4px;line-height:5.28px;top:100.56px;left:283.15px;width:100px;text-align:center;color:#3a3a3a;-webkit-text-stroke:0.08px;">G</div>
<div class="t" style="font-size:4.4px;line-height:5.28px;top:100.56px;left:315.90px;width:100px;text-align:center;color:#3a3a3a;-webkit-text-stroke:0.08px;">H</div>
<div class="t" style="font-size:4.4px;line-height:5.28px;top:100.56px;left:348.55px;width:100px;text-align:center;color:#3a3a3a;-webkit-text-stroke:0.08px;">I</div>
<div class="t" style="font-size:4.4px;line-height:5.28px;top:100.56px;left:381.15px;width:100px;text-align:center;color:#3a3a3a;-webkit-text-stroke:0.08px;">J</div>
<div class="t" style="font-size:4.4px;line-height:5.28px;top:100.56px;left:413.80px;width:100px;text-align:center;color:#3a3a3a;-webkit-text-stroke:0.08px;">K</div>
<div class="t" style="font-size:4.4px;line-height:5.28px;top:100.56px;left:446.35px;width:100px;text-align:center;color:#3a3a3a;-webkit-text-stroke:0.08px;">L</div>
<div class="t" style="font-size:4.4px;line-height:5.28px;top:100.56px;left:478.90px;width:100px;text-align:center;color:#3a3a3a;-webkit-text-stroke:0.08px;">M</div>
<div class="t" style="font-size:4.4px;line-height:5.28px;top:100.56px;left:511.50px;width:100px;text-align:center;color:#3a3a3a;-webkit-text-stroke:0.08px;">N</div>
<div class="t" style="font-size:4.4px;line-height:5.28px;top:100.56px;left:544.20px;width:100px;text-align:center;color:#3a3a3a;-webkit-text-stroke:0.08px;">O</div>
<div class="t" style="font-size:4.6px;line-height:5.52px;top:115.34px;left:-30.65px;width:100px;text-align:center;color:#222;">1</div>
<div class="t" style="font-size:4.6px;line-height:5.52px;top:132.69px;left:-30.65px;width:100px;text-align:center;color:#222;">2</div>
<div class="t" style="font-size:4.6px;line-height:5.52px;top:141.24px;left:-30.65px;width:100px;text-align:center;color:#222;">3</div>
<div class="t" style="font-size:4.6px;line-height:5.52px;top:154.49px;left:-30.65px;width:100px;text-align:center;color:#222;">4</div>
<div class="t" style="font-size:4.6px;line-height:5.52px;top:168.19px;left:-30.65px;width:100px;text-align:center;color:#222;">5</div>
<div class="t" style="font-size:4.6px;line-height:5.52px;top:174.49px;left:-30.65px;width:100px;text-align:center;color:#222;">6</div>
<div class="t" style="font-size:4.6px;line-height:5.52px;top:180.79px;left:-30.65px;width:100px;text-align:center;color:#222;">7</div>
<div class="t" style="font-size:4.6px;line-height:5.52px;top:187.09px;left:-30.65px;width:100px;text-align:center;color:#222;">8</div>
<div class="t" style="font-size:4.6px;line-height:5.52px;top:193.39px;left:-30.65px;width:100px;text-align:center;color:#222;">9</div>
<div class="t" style="font-size:4.6px;line-height:5.52px;top:199.69px;left:-30.65px;width:100px;text-align:center;color:#222;">10</div>
<div class="t" style="font-size:4.6px;line-height:5.52px;top:205.99px;left:-30.65px;width:100px;text-align:center;color:#222;">11</div>
<div class="t" style="font-size:4.6px;line-height:5.52px;top:212.29px;left:-30.65px;width:100px;text-align:center;color:#222;">12</div>
<div class="t" style="font-size:4.6px;line-height:5.52px;top:218.59px;left:-30.65px;width:100px;text-align:center;color:#222;">13</div>
<div class="t" style="font-size:4.6px;line-height:5.52px;top:224.89px;left:-30.65px;width:100px;text-align:center;color:#222;">14</div>
<div class="t" style="font-size:4.6px;line-height:5.52px;top:231.19px;left:-30.65px;width:100px;text-align:center;color:#222;">15</div>
<div class="t" style="font-size:4.6px;line-height:5.52px;top:237.49px;left:-30.65px;width:100px;text-align:center;color:#222;">16</div>
<div class="t" style="font-size:4.6px;line-height:5.52px;top:243.79px;left:-30.65px;width:100px;text-align:center;color:#222;">17</div>
<div class="t" style="font-size:4.6px;line-height:5.52px;top:250.29px;left:-30.65px;width:100px;text-align:center;color:#222;">18</div>
<div class="t" style="font-size:4.6px;line-height:5.52px;top:258.71px;left:-30.65px;width:100px;text-align:center;color:#222;">19</div>
<div class="t" style="font-size:4.6px;line-height:5.52px;top:267.06px;left:-30.65px;width:100px;text-align:center;color:#222;">20</div>
<div class="t" style="font-size:4.6px;line-height:5.52px;top:274.81px;left:-30.65px;width:100px;text-align:center;color:#222;">21</div>
<div class="t" style="font-size:4.6px;line-height:5.52px;top:282.56px;left:-30.65px;width:100px;text-align:center;color:#222;">22</div>
<div class="t" style="font-size:4.6px;line-height:5.52px;top:290.31px;left:-30.65px;width:100px;text-align:center;color:#222;">23</div>
<div class="t" style="font-size:4.6px;line-height:5.52px;top:298.06px;left:-30.65px;width:100px;text-align:center;color:#222;">24</div>
<div class="t" style="font-size:4.6px;line-height:5.52px;top:305.81px;left:-30.65px;width:100px;text-align:center;color:#222;">25</div>
<div class="t" style="font-size:4.6px;line-height:5.52px;top:313.56px;left:-30.65px;width:100px;text-align:center;color:#222;">26</div>
<div class="t" style="font-size:4.6px;line-height:5.52px;top:321.31px;left:-30.65px;width:100px;text-align:center;color:#222;">27</div>
<div class="t" style="font-size:4.6px;line-height:5.52px;top:329.06px;left:-30.65px;width:100px;text-align:center;color:#222;">28</div>
<div class="t" style="font-size:4.6px;line-height:5.52px;top:336.81px;left:-30.65px;width:100px;text-align:center;color:#222;">29</div>
<div class="t" style="font-size:4.6px;line-height:5.52px;top:344.56px;left:-30.65px;width:100px;text-align:center;color:#222;">30</div>
<div class="t" style="font-size:4.6px;line-height:5.52px;top:352.31px;left:-30.65px;width:100px;text-align:center;color:#222;">31</div>
<div class="t" style="font-size:4.6px;line-height:5.52px;top:360.06px;left:-30.65px;width:100px;text-align:center;color:#222;">32</div>
<div class="t" style="font-size:4.6px;line-height:5.52px;top:367.81px;left:-30.65px;width:100px;text-align:center;color:#222;">33</div>
<div style="left:27.80px;top:107.00px;width:182.60px;height:22.00px;background:#fff;"></div>
<div class="t title" style="font-size:16.0px;line-height:19.20px;top:108.70px;letter-spacing:-0.257px;left:29.40px;color:#0a0a0a;font-weight:bold;-webkit-text-stroke:0.2px;">Lucy's Lemonade Stand</div>
<div style="left:27.80px;top:140.30px;width:322.40px;height:115.60px;background:#fff;border-right:0.8px solid #c2c2c2;border-bottom:0.7px solid #cecece;border-top:0.6px solid #d4d4d4;"></div>
<svg style="left:0;top:0" width="640" height="400" viewBox="0 0 640 400"><rect x="27.45" y="129.60" width="289.60" height="10.50" fill="#fff" stroke="#9ccbf6" stroke-width="0.9"/><rect x="316.45" y="129.20" width="0.95" height="11.30" fill="#4c9af0"/></svg>
<div class="t sub" style="font-size:9.1px;line-height:10.92px;top:129.84px;letter-spacing:-0.052px;left:28.80px;color:#2a2a2a;font-family:'Liberation Serif',serif;">“The best lemonade stand in Mountain View”</div>
<svg style="left:0;top:0" width="640" height="400" viewBox="0 0 640 400"><path d="M71.6 234.60 H305.8" stroke="#c8c8c8" stroke-width="0.7"/><path d="M71.6 216.80 H305.8" stroke="#e2e2e2" stroke-width="0.7"/><path d="M71.6 199.00 H305.8" stroke="#e2e2e2" stroke-width="0.7"/><path d="M71.6 181.20 H305.8" stroke="#e2e2e2" stroke-width="0.7"/><path d="M71.6 163.40 H305.8" stroke="#e2e2e2" stroke-width="0.7"/><rect x="71.88" y="191.67" width="1.24" height="42.93" fill="#3d7fd0"/><rect x="74.43" y="220.50" width="1.24" height="14.10" fill="#3d7fd0"/><rect x="76.98" y="190.49" width="1.24" height="44.11" fill="#3d7fd0"/><rect x="79.53" y="199.04" width="1.24" height="35.56" fill="#3d7fd0"/><rect x="82.08" y="200.32" width="1.24" height="34.28" fill="#3d7fd0"/><rect x="84.63" y="188.46" width="1.24" height="46.14" fill="#3d7fd0"/><rect x="87.18" y="204.27" width="1.24" height="30.33" fill="#3d7fd0"/><rect x="89.73" y="203.31" width="1.24" height="31.29" fill="#3d7fd0"/><rect x="92.28" y="207.69" width="1.24" height="26.91" fill="#3d7fd0"/><rect x="94.83" y="219.43" width="1.24" height="15.17" fill="#3d7fd0"/><rect x="97.38" y="223.49" width="1.24" height="11.11" fill="#3d7fd0"/><rect x="99.93" y="205.44" width="1.24" height="29.16" fill="#3d7fd0"/><rect x="102.48" y="200.64" width="1.24" height="33.96" fill="#3d7fd0"/><rect x="105.03" y="221.46" width="1.24" height="13.14" fill="#3d7fd0"/><rect x="107.58" y="200.92" width="1.24" height="33.68" fill="#3d7fd0"/><rect x="110.13" y="210.18" width="1.24" height="24.42" fill="#3d7fd0"/><rect x="112.68" y="189.03" width="1.24" height="45.57" fill="#3d7fd0"/><rect x="115.23" y="220.93" width="1.24" height="13.67" fill="#3d7fd0"/><rect x="117.78" y="198.43" width="1.24" height="36.17" fill="#3d7fd0"/><rect x="120.33" y="223.03" width="1.24" height="11.57" fill="#3d7fd0"/><rect x="122.88" y="187.68" width="1.24" height="46.92" fill="#3d7fd0"/><rect x="125.43" y="189.03" width="1.24" height="45.57" fill="#3d7fd0"/><rect x="127.98" y="198.43" width="1.24" height="36.17" fill="#3d7fd0"/><rect x="130.53" y="178.46" width="1.24" height="56.14" fill="#3d7fd0"/><rect x="133.08" y="201.49" width="1.24" height="33.11" fill="#3d7fd0"/><rect x="135.63" y="180.84" width="1.24" height="53.76" fill="#3d7fd0"/><rect x="138.18" y="200.64" width="1.24" height="33.96" fill="#3d7fd0"/><rect x="140.73" y="210.39" width="1.24" height="24.21" fill="#3d7fd0"/><rect x="143.28" y="197.22" width="1.24" height="37.38" fill="#3d7fd0"/><rect x="145.83" y="221.61" width="1.24" height="12.99" fill="#3d7fd0"/><rect x="148.38" y="221.25" width="1.24" height="13.35" fill="#3d7fd0"/><rect x="150.93" y="198.50" width="1.24" height="36.10" fill="#3d7fd0"/><rect x="153.48" y="210.39" width="1.24" height="24.21" fill="#3d7fd0"/><rect x="156.03" y="178.35" width="1.24" height="56.25" fill="#3d7fd0"/><rect x="158.58" y="206.48" width="1.24" height="28.12" fill="#3d7fd0"/><rect x="161.13" y="225.70" width="1.24" height="8.90" fill="#3d7fd0"/><rect x="163.68" y="211.46" width="1.24" height="23.14" fill="#3d7fd0"/><rect x="166.23" y="216.23" width="1.24" height="18.37" fill="#3d7fd0"/><rect x="168.78" y="216.80" width="1.24" height="17.80" fill="#3d7fd0"/><rect x="171.33" y="210.39" width="1.24" height="24.21" fill="#3d7fd0"/><rect x="173.88" y="218.94" width="1.24" height="15.66" fill="#3d7fd0"/><rect x="176.43" y="218.22" width="1.24" height="16.38" fill="#3d7fd0"/><rect x="178.98" y="220.86" width="1.24" height="13.74" fill="#3d7fd0"/><rect x="181.53" y="226.59" width="1.24" height="8.01" fill="#3d7fd0"/><rect x="184.08" y="228.90" width="1.24" height="5.70" fill="#3d7fd0"/><rect x="186.63" y="219.29" width="1.24" height="15.31" fill="#3d7fd0"/><rect x="189.18" y="217.16" width="1.24" height="17.44" fill="#3d7fd0"/><rect x="191.73" y="228.73" width="1.24" height="5.87" fill="#3d7fd0"/><rect x="194.28" y="219.72" width="1.24" height="14.88" fill="#3d7fd0"/><rect x="196.83" y="223.92" width="1.24" height="10.68" fill="#3d7fd0"/><rect x="199.38" y="214.66" width="1.24" height="19.94" fill="#3d7fd0"/><rect x="201.93" y="228.55" width="1.24" height="6.05" fill="#3d7fd0"/><rect x="204.48" y="218.76" width="1.24" height="15.84" fill="#3d7fd0"/><rect x="207.03" y="229.37" width="1.24" height="5.23" fill="#3d7fd0"/><rect x="209.58" y="213.95" width="1.24" height="20.65" fill="#3d7fd0"/><rect x="212.13" y="214.66" width="1.24" height="19.94" fill="#3d7fd0"/><rect x="214.68" y="218.76" width="1.24" height="15.84" fill="#3d7fd0"/><rect x="217.23" y="209.68" width="1.24" height="24.92" fill="#3d7fd0"/><rect x="219.78" y="220.00" width="1.24" height="14.60" fill="#3d7fd0"/><rect x="222.33" y="211.10" width="1.24" height="23.50" fill="#3d7fd0"/><rect x="224.88" y="220.00" width="1.24" height="14.60" fill="#3d7fd0"/><rect x="227.43" y="223.92" width="1.24" height="10.68" fill="#3d7fd0"/><rect x="229.98" y="217.87" width="1.24" height="16.73" fill="#3d7fd0"/><rect x="232.53" y="228.73" width="1.24" height="5.87" fill="#3d7fd0"/><rect x="235.08" y="212.17" width="1.24" height="22.43" fill="#3d7fd0"/><rect x="237.63" y="226.23" width="1.24" height="8.37" fill="#3d7fd0"/><rect x="240.18" y="218.58" width="1.24" height="16.02" fill="#3d7fd0"/><rect x="242.73" y="203.38" width="1.24" height="31.22" fill="#3d7fd0"/><rect x="245.28" y="212.17" width="1.24" height="22.43" fill="#3d7fd0"/><rect x="247.83" y="204.13" width="1.24" height="30.47" fill="#3d7fd0"/><rect x="250.38" y="203.38" width="1.24" height="31.22" fill="#3d7fd0"/><rect x="252.93" y="166.39" width="1.24" height="68.21" fill="#3d7fd0"/><rect x="255.48" y="220.00" width="1.24" height="14.60" fill="#3d7fd0"/><rect x="258.03" y="206.12" width="1.24" height="28.48" fill="#3d7fd0"/><rect x="260.58" y="193.87" width="1.24" height="40.73" fill="#3d7fd0"/><rect x="263.13" y="196.51" width="1.24" height="38.09" fill="#3d7fd0"/><rect x="265.68" y="206.26" width="1.24" height="28.34" fill="#3d7fd0"/><rect x="268.23" y="198.00" width="1.24" height="36.60" fill="#3d7fd0"/><rect x="270.78" y="200.50" width="1.24" height="34.10" fill="#3d7fd0"/><rect x="273.33" y="187.15" width="1.24" height="47.45" fill="#3d7fd0"/><rect x="275.88" y="188.39" width="1.24" height="46.21" fill="#3d7fd0"/><rect x="278.43" y="173.37" width="1.24" height="61.23" fill="#3d7fd0"/><rect x="280.98" y="173.72" width="1.24" height="60.88" fill="#3d7fd0"/><rect x="283.53" y="172.66" width="1.24" height="61.94" fill="#3d7fd0"/><rect x="286.08" y="187.25" width="1.24" height="47.35" fill="#3d7fd0"/><rect x="288.63" y="180.27" width="1.24" height="54.33" fill="#3d7fd0"/><rect x="291.18" y="174.08" width="1.24" height="60.52" fill="#3d7fd0"/><rect x="293.73" y="170.52" width="1.24" height="64.08" fill="#3d7fd0"/><rect x="296.28" y="167.39" width="1.24" height="67.21" fill="#3d7fd0"/><rect x="298.83" y="163.40" width="1.24" height="71.20" fill="#3d7fd0"/><rect x="301.38" y="174.26" width="1.24" height="60.34" fill="#3d7fd0"/><rect x="303.93" y="165.89" width="1.24" height="68.71" fill="#3d7fd0"/><rect x="310.9" y="163.2" width="4.6" height="4.6" fill="#5b95dc"/></svg>
<div class="t" style="font-size:4.7px;line-height:5.64px;top:231.98px;right:573.70px;color:#555;-webkit-text-stroke:0.1px;">0</div>
<div class="t" style="font-size:4.7px;line-height:5.64px;top:214.18px;right:573.70px;color:#555;-webkit-text-stroke:0.1px;">50</div>
<div class="t" style="font-size:4.7px;line-height:5.64px;top:196.38px;right:573.70px;color:#555;-webkit-text-stroke:0.1px;">100</div>
<div class="t" style="font-size:4.7px;line-height:5.64px;top:178.58px;right:573.70px;color:#555;-webkit-text-stroke:0.1px;">150</div>
<div class="t" style="font-size:4.7px;line-height:5.64px;top:160.78px;right:573.70px;color:#555;-webkit-text-stroke:0.1px;">200</div>
<div class="t" style="font-size:4.6px;line-height:5.52px;top:149.44px;letter-spacing:0.085px;left:71.50px;color:#222;font-weight:bold;-webkit-text-stroke:0.1px;">Daily sales</div>
<div class="t" style="font-size:4.8px;line-height:5.76px;top:162.72px;letter-spacing:0.142px;left:318.00px;color:#333;-webkit-text-stroke:0.08px;">Revenue</div>
<div class="t" style="font-size:4.5px;line-height:5px;right:566.60px;top:236.4px;color:#4a4a4a;-webkit-text-stroke:0.1px;transform-origin:100% 50%;transform:rotate(-30deg);">1-Jun</div>
<div class="t" style="font-size:4.5px;line-height:5px;right:553.85px;top:236.4px;color:#4a4a4a;-webkit-text-stroke:0.1px;transform-origin:100% 50%;transform:rotate(-30deg);">6-Jun</div>
<div class="t" style="font-size:4.5px;line-height:5px;right:541.10px;top:236.4px;color:#4a4a4a;-webkit-text-stroke:0.1px;transform-origin:100% 50%;transform:rotate(-30deg);">11-Jun</div>
<div class="t" style="font-size:4.5px;line-height:5px;right:528.35px;top:236.4px;color:#4a4a4a;-webkit-text-stroke:0.1px;transform-origin:100% 50%;transform:rotate(-30deg);">16-Jun</div>
<div class="t" style="font-size:4.5px;line-height:5px;right:515.60px;top:236.4px;color:#4a4a4a;-webkit-text-stroke:0.1px;transform-origin:100% 50%;transform:rotate(-30deg);">21-Jun</div>
<div class="t" style="font-size:4.5px;line-height:5px;right:502.85px;top:236.4px;color:#4a4a4a;-webkit-text-stroke:0.1px;transform-origin:100% 50%;transform:rotate(-30deg);">26-Jun</div>
<div class="t" style="font-size:4.5px;line-height:5px;right:490.10px;top:236.4px;color:#4a4a4a;-webkit-text-stroke:0.1px;transform-origin:100% 50%;transform:rotate(-30deg);">1-Jul</div>
<div class="t" style="font-size:4.5px;line-height:5px;right:477.35px;top:236.4px;color:#4a4a4a;-webkit-text-stroke:0.1px;transform-origin:100% 50%;transform:rotate(-30deg);">6-Jul</div>
<div class="t" style="font-size:4.5px;line-height:5px;right:464.60px;top:236.4px;color:#4a4a4a;-webkit-text-stroke:0.1px;transform-origin:100% 50%;transform:rotate(-30deg);">11-Jul</div>
<div class="t" style="font-size:4.5px;line-height:5px;right:451.85px;top:236.4px;color:#4a4a4a;-webkit-text-stroke:0.1px;transform-origin:100% 50%;transform:rotate(-30deg);">16-Jul</div>
<div class="t" style="font-size:4.5px;line-height:5px;right:439.10px;top:236.4px;color:#4a4a4a;-webkit-text-stroke:0.1px;transform-origin:100% 50%;transform:rotate(-30deg);">21-Jul</div>
<div class="t" style="font-size:4.5px;line-height:5px;right:426.35px;top:236.4px;color:#4a4a4a;-webkit-text-stroke:0.1px;transform-origin:100% 50%;transform:rotate(-30deg);">26-Jul</div>
<div class="t" style="font-size:4.5px;line-height:5px;right:413.60px;top:236.4px;color:#4a4a4a;-webkit-text-stroke:0.1px;transform-origin:100% 50%;transform:rotate(-30deg);">31-Jul</div>
<div class="t" style="font-size:4.5px;line-height:5px;right:400.85px;top:236.4px;color:#4a4a4a;-webkit-text-stroke:0.1px;transform-origin:100% 50%;transform:rotate(-30deg);">5-Aug</div>
<div class="t" style="font-size:4.5px;line-height:5px;right:388.10px;top:236.4px;color:#4a4a4a;-webkit-text-stroke:0.1px;transform-origin:100% 50%;transform:rotate(-30deg);">10-Aug</div>
<div class="t" style="font-size:4.5px;line-height:5px;right:375.35px;top:236.4px;color:#4a4a4a;-webkit-text-stroke:0.1px;transform-origin:100% 50%;transform:rotate(-30deg);">15-Aug</div>
<div class="t" style="font-size:4.5px;line-height:5px;right:362.60px;top:236.4px;color:#4a4a4a;-webkit-text-stroke:0.1px;transform-origin:100% 50%;transform:rotate(-30deg);">20-Aug</div>
<div class="t" style="font-size:4.5px;line-height:5px;right:349.85px;top:236.4px;color:#4a4a4a;-webkit-text-stroke:0.1px;transform-origin:100% 50%;transform:rotate(-30deg);">25-Aug</div>
<div class="t" style="font-size:4.5px;line-height:5px;right:337.10px;top:236.4px;color:#4a4a4a;-webkit-text-stroke:0.1px;transform-origin:100% 50%;transform:rotate(-30deg);">30-Aug</div>
<div style="left:27.20px;top:256.30px;width:289.80px;height:8.95px;background:#3b3b3b;"></div>
<div class="t" style="font-size:6.7px;line-height:8.04px;top:256.65px;letter-spacing:-0.200px;left:28.80px;color:#fff;font-weight:bold;-webkit-text-stroke:0.1px;">Date</div>
<div class="t" style="font-size:6.7px;line-height:8.04px;top:256.65px;letter-spacing:-0.305px;left:66.20px;color:#fff;font-weight:bold;-webkit-text-stroke:0.1px;">Glasses sold</div>
<div class="t" style="font-size:6.7px;line-height:8.04px;top:256.65px;letter-spacing:-0.178px;left:120.20px;color:#fff;font-weight:bold;-webkit-text-stroke:0.1px;">Revenue / glass</div>
<div class="t" style="font-size:6.7px;line-height:8.04px;top:256.65px;letter-spacing:-0.177px;left:202.50px;color:#fff;font-weight:bold;-webkit-text-stroke:0.1px;">Total</div>
<div class="t" style="font-size:6.7px;line-height:8.04px;top:256.65px;letter-spacing:-0.309px;left:222.00px;color:#fff;font-weight:bold;-webkit-text-stroke:0.1px;">% daily change</div>
<div class="t" style="font-size:6.7px;line-height:8.04px;top:256.65px;letter-spacing:-0.063px;left:282.50px;color:#fff;font-weight:bold;-webkit-text-stroke:0.1px;">Daily temp</div>
<div class="t" style="font-size:5.7px;line-height:6.84px;top:266.15px;letter-spacing:-0.467px;left:28.80px;color:#1e1e1e;">1-Jun</div>
<div class="t" style="font-size:5.7px;line-height:6.84px;top:266.15px;right:536.42px;color:#1e1e1e;letter-spacing:-0.22px;">402</div>
<div class="t" style="font-size:5.7px;line-height:6.84px;top:266.15px;right:471.62px;color:#1e1e1e;letter-spacing:-0.22px;">$0.30</div>
<div class="t" style="font-size:5.7px;line-height:6.84px;top:266.15px;right:422.72px;color:#1e1e1e;letter-spacing:-0.22px;">$120.60</div>
<div class="t" style="font-size:5.7px;line-height:6.84px;top:266.15px;left:220.60px;color:#777;">--</div>
<div class="t" style="font-size:5.7px;line-height:6.84px;top:266.15px;right:324.62px;color:#1e1e1e;letter-spacing:-0.22px;">74</div>
<div style="left:27.70px;top:273.20px;width:289.10px;height:7.65px;background:#dbe5f1;"></div>
<div class="t" style="font-size:5.7px;line-height:6.84px;top:273.90px;letter-spacing:-0.467px;left:28.80px;color:#1e1e1e;">2-Jun</div>
<div class="t" style="font-size:5.7px;line-height:6.84px;top:273.90px;right:536.42px;color:#1e1e1e;letter-spacing:-0.22px;">132</div>
<div class="t" style="font-size:5.7px;line-height:6.84px;top:273.90px;right:471.62px;color:#1e1e1e;letter-spacing:-0.22px;">$0.30</div>
<div class="t" style="font-size:5.7px;line-height:6.84px;top:273.90px;right:422.72px;color:#1e1e1e;letter-spacing:-0.22px;">$39.60</div>
<div class="t" style="font-size:5.7px;line-height:6.84px;top:273.90px;right:373.82px;color:#1e1e1e;letter-spacing:-0.22px;">-67%</div>
<div class="t" style="font-size:5.7px;line-height:6.84px;top:273.90px;right:324.62px;color:#1e1e1e;letter-spacing:-0.22px;">73</div>
<div class="t" style="font-size:5.7px;line-height:6.84px;top:281.65px;letter-spacing:-0.467px;left:28.80px;color:#1e1e1e;">3-Jun</div>
<div class="t" style="font-size:5.7px;line-height:6.84px;top:281.65px;right:536.42px;color:#1e1e1e;letter-spacing:-0.22px;">413</div>
<div class="t" style="font-size:5.7px;line-height:6.84px;top:281.65px;right:471.62px;color:#1e1e1e;letter-spacing:-0.22px;">$0.30</div>
<div class="t" style="font-size:5.7px;line-height:6.84px;top:281.65px;right:422.72px;color:#1e1e1e;letter-spacing:-0.22px;">$123.90</div>
<div class="t" style="font-size:5.7px;line-height:6.84px;top:281.65px;right:373.82px;color:#1e1e1e;letter-spacing:-0.22px;">213%</div>
<div class="t" style="font-size:5.7px;line-height:6.84px;top:281.65px;right:324.62px;color:#1e1e1e;letter-spacing:-0.22px;">72</div>
<div style="left:27.70px;top:288.70px;width:289.10px;height:7.65px;background:#dbe5f1;"></div>
<div class="t" style="font-size:5.7px;line-height:6.84px;top:289.40px;letter-spacing:-0.467px;left:28.80px;color:#1e1e1e;">4-Jun</div>
<div class="t" style="font-size:5.7px;line-height:6.84px;top:289.40px;right:536.42px;color:#1e1e1e;letter-spacing:-0.22px;">333</div>
<div class="t" style="font-size:5.7px;line-height:6.84px;top:289.40px;right:471.62px;color:#1e1e1e;letter-spacing:-0.22px;">$0.30</div>
<div class="t" style="font-size:5.7px;line-height:6.84px;top:289.40px;right:422.72px;color:#1e1e1e;letter-spacing:-0.22px;">$99.90</div>
<div class="t" style="font-size:5.7px;line-height:6.84px;top:289.40px;right:373.82px;color:#1e1e1e;letter-spacing:-0.22px;">-19%</div>
<div class="t" style="font-size:5.7px;line-height:6.84px;top:289.40px;right:324.62px;color:#1e1e1e;letter-spacing:-0.22px;">74</div>
<div class="t" style="font-size:5.7px;line-height:6.84px;top:297.15px;letter-spacing:-0.467px;left:28.80px;color:#1e1e1e;">5-Jun</div>
<div class="t" style="font-size:5.7px;line-height:6.84px;top:297.15px;right:536.42px;color:#1e1e1e;letter-spacing:-0.22px;">321</div>
<div class="t" style="font-size:5.7px;line-height:6.84px;top:297.15px;right:471.62px;color:#1e1e1e;letter-spacing:-0.22px;">$0.30</div>
<div class="t" style="font-size:5.7px;line-height:6.84px;top:297.15px;right:422.72px;color:#1e1e1e;letter-spacing:-0.22px;">$96.30</div>
<div class="t" style="font-size:5.7px;line-height:6.84px;top:297.15px;right:373.82px;color:#1e1e1e;letter-spacing:-0.22px;">-4%</div>
<div class="t" style="font-size:5.7px;line-height:6.84px;top:297.15px;right:324.62px;color:#1e1e1e;letter-spacing:-0.22px;">82</div>
<div style="left:27.70px;top:304.20px;width:289.10px;height:7.65px;background:#dbe5f1;"></div>
<div class="t" style="font-size:5.7px;line-height:6.84px;top:304.90px;letter-spacing:-0.467px;left:28.80px;color:#1e1e1e;">6-Jun</div>
<div class="t" style="font-size:5.7px;line-height:6.84px;top:304.90px;right:536.42px;color:#1e1e1e;letter-spacing:-0.22px;">432</div>
<div class="t" style="font-size:5.7px;line-height:6.84px;top:304.90px;right:471.62px;color:#1e1e1e;letter-spacing:-0.22px;">$0.30</div>
<div class="t" style="font-size:5.7px;line-height:6.84px;top:304.90px;right:422.72px;color:#1e1e1e;letter-spacing:-0.22px;">$129.60</div>
<div class="t" style="font-size:5.7px;line-height:6.84px;top:304.90px;right:373.82px;color:#1e1e1e;letter-spacing:-0.22px;">35%</div>
<div class="t" style="font-size:5.7px;line-height:6.84px;top:304.90px;right:324.62px;color:#1e1e1e;letter-spacing:-0.22px;">84</div>
<div class="t" style="font-size:5.7px;line-height:6.84px;top:312.65px;letter-spacing:-0.467px;left:28.80px;color:#1e1e1e;">7-Jun</div>
<div class="t" style="font-size:5.7px;line-height:6.84px;top:312.65px;right:536.42px;color:#1e1e1e;letter-spacing:-0.22px;">284</div>
<div class="t" style="font-size:5.7px;line-height:6.84px;top:312.65px;right:471.62px;color:#1e1e1e;letter-spacing:-0.22px;">$0.30</div>
<div class="t" style="font-size:5.7px;line-height:6.84px;top:312.65px;right:422.72px;color:#1e1e1e;letter-spacing:-0.22px;">$85.20</div>
<div class="t" style="font-size:5.7px;line-height:6.84px;top:312.65px;right:373.82px;color:#1e1e1e;letter-spacing:-0.22px;">-34%</div>
<div class="t" style="font-size:5.7px;line-height:6.84px;top:312.65px;right:324.62px;color:#1e1e1e;letter-spacing:-0.22px;">93</div>
<div style="left:27.70px;top:319.70px;width:289.10px;height:7.65px;background:#dbe5f1;"></div>
<div class="t" style="font-size:5.7px;line-height:6.84px;top:320.40px;letter-spacing:-0.467px;left:28.80px;color:#1e1e1e;">8-Jun</div>
<div class="t" style="font-size:5.7px;line-height:6.84px;top:320.40px;right:536.42px;color:#1e1e1e;letter-spacing:-0.22px;">293</div>
<div class="t" style="font-size:5.7px;line-height:6.84px;top:320.40px;right:471.62px;color:#1e1e1e;letter-spacing:-0.22px;">$0.30</div>
<div class="t" style="font-size:5.7px;line-height:6.84px;top:320.40px;right:422.72px;color:#1e1e1e;letter-spacing:-0.22px;">$87.90</div>
<div class="t" style="font-size:5.7px;line-height:6.84px;top:320.40px;right:373.82px;color:#1e1e1e;letter-spacing:-0.22px;">3%</div>
<div class="t" style="font-size:5.7px;line-height:6.84px;top:320.40px;right:324.62px;color:#1e1e1e;letter-spacing:-0.22px;">92</div>
<div class="t" style="font-size:5.7px;line-height:6.84px;top:328.15px;letter-spacing:-0.467px;left:28.80px;color:#1e1e1e;">9-Jun</div>
<div class="t" style="font-size:5.7px;line-height:6.84px;top:328.15px;right:536.42px;color:#1e1e1e;letter-spacing:-0.22px;">252</div>
<div class="t" style="font-size:5.7px;line-height:6.84px;top:328.15px;right:471.62px;color:#1e1e1e;letter-spacing:-0.22px;">$0.30</div>
<div class="t" style="font-size:5.7px;line-height:6.84px;top:328.15px;right:422.72px;color:#1e1e1e;letter-spacing:-0.22px;">$75.60</div>
<div class="t" style="font-size:5.7px;line-height:6.84px;top:328.15px;right:373.82px;color:#1e1e1e;letter-spacing:-0.22px;">-14%</div>
<div class="t" style="font-size:5.7px;line-height:6.84px;top:328.15px;right:324.62px;color:#1e1e1e;letter-spacing:-0.22px;">91</div>
<div style="left:27.70px;top:335.20px;width:289.10px;height:7.65px;background:#dbe5f1;"></div>
<div class="t" style="font-size:5.7px;line-height:6.84px;top:335.90px;letter-spacing:-0.315px;left:28.80px;color:#1e1e1e;">10-Jun</div>
<div class="t" style="font-size:5.7px;line-height:6.84px;top:335.90px;right:536.42px;color:#1e1e1e;letter-spacing:-0.22px;">142</div>
<div class="t" style="font-size:5.7px;line-height:6.84px;top:335.90px;right:471.62px;color:#1e1e1e;letter-spacing:-0.22px;">$0.30</div>
<div class="t" style="font-size:5.7px;line-height:6.84px;top:335.90px;right:422.72px;color:#1e1e1e;letter-spacing:-0.22px;">$42.60</div>
<div class="t" style="font-size:5.7px;line-height:6.84px;top:335.90px;right:373.82px;color:#1e1e1e;letter-spacing:-0.22px;">-44%</div>
<div class="t" style="font-size:5.7px;line-height:6.84px;top:335.90px;right:324.62px;color:#1e1e1e;letter-spacing:-0.22px;">99</div>
<div class="t" style="font-size:5.7px;line-height:6.84px;top:343.65px;letter-spacing:-0.245px;left:28.80px;color:#1e1e1e;">11-Jun</div>
<div class="t" style="font-size:5.7px;line-height:6.84px;top:343.65px;right:536.42px;color:#1e1e1e;letter-spacing:-0.22px;">104</div>
<div class="t" style="font-size:5.7px;line-height:6.84px;top:343.65px;right:471.62px;color:#1e1e1e;letter-spacing:-0.22px;">$0.30</div>
<div class="t" style="font-size:5.7px;line-height:6.84px;top:343.65px;right:422.72px;color:#1e1e1e;letter-spacing:-0.22px;">$31.20</div>
<div class="t" style="font-size:5.7px;line-height:6.84px;top:343.65px;right:373.82px;color:#1e1e1e;letter-spacing:-0.22px;">-27%</div>
<div class="t" style="font-size:5.7px;line-height:6.84px;top:343.65px;right:324.62px;color:#1e1e1e;letter-spacing:-0.22px;">98</div>
<div style="left:27.70px;top:350.70px;width:289.10px;height:7.65px;background:#dbe5f1;"></div>
<div class="t" style="font-size:5.7px;line-height:6.84px;top:351.40px;letter-spacing:-0.315px;left:28.80px;color:#1e1e1e;">12-Jun</div>
<div class="t" style="font-size:5.7px;line-height:6.84px;top:351.40px;right:536.42px;color:#1e1e1e;letter-spacing:-0.22px;">273</div>
<div class="t" style="font-size:5.7px;line-height:6.84px;top:351.40px;right:471.62px;color:#1e1e1e;letter-spacing:-0.22px;">$0.30</div>
<div class="t" style="font-size:5.7px;line-height:6.84px;top:351.40px;right:422.72px;color:#1e1e1e;letter-spacing:-0.22px;">$81.90</div>
<div class="t" style="font-size:5.7px;line-height:6.84px;top:351.40px;right:373.82px;color:#1e1e1e;letter-spacing:-0.22px;">162%</div>
<div class="t" style="font-size:5.7px;line-height:6.84px;top:351.40px;right:324.62px;color:#1e1e1e;letter-spacing:-0.22px;">94</div>
<div class="t" style="font-size:5.7px;line-height:6.84px;top:359.15px;letter-spacing:-0.315px;left:28.80px;color:#1e1e1e;">13-Jun</div>
<div class="t" style="font-size:5.7px;line-height:6.84px;top:359.15px;right:536.42px;color:#1e1e1e;letter-spacing:-0.22px;">318</div>
<div class="t" style="font-size:5.7px;line-height:6.84px;top:359.15px;right:471.62px;color:#1e1e1e;letter-spacing:-0.22px;">$0.30</div>
<div class="t" style="font-size:5.7px;line-height:6.84px;top:359.15px;right:422.72px;color:#1e1e1e;letter-spacing:-0.22px;">$95.40</div>
<div class="t" style="font-size:5.7px;line-height:6.84px;top:359.15px;right:373.82px;color:#1e1e1e;letter-spacing:-0.22px;">16%</div>
<div class="t" style="font-size:5.7px;line-height:6.84px;top:359.15px;right:324.62px;color:#1e1e1e;letter-spacing:-0.22px;">96</div>
<div style="left:27.70px;top:366.20px;width:289.10px;height:7.65px;background:#dbe5f1;"></div>
<div class="t" style="font-size:5.7px;line-height:6.84px;top:366.90px;letter-spacing:-0.315px;left:28.80px;color:#1e1e1e;">14-Jun</div>
<div class="t" style="font-size:5.7px;line-height:6.84px;top:366.90px;right:536.42px;color:#1e1e1e;letter-spacing:-0.22px;">123</div>
<div class="t" style="font-size:5.7px;line-height:6.84px;top:366.90px;right:471.62px;color:#1e1e1e;letter-spacing:-0.22px;">$0.30</div>
<div class="t" style="font-size:5.7px;line-height:6.84px;top:366.90px;right:422.72px;color:#1e1e1e;letter-spacing:-0.22px;">$36.90</div>
<div class="t" style="font-size:5.7px;line-height:6.84px;top:366.90px;right:373.82px;color:#1e1e1e;letter-spacing:-0.22px;">-61%</div>
<div class="t" style="font-size:5.7px;line-height:6.84px;top:366.90px;right:324.62px;color:#1e1e1e;letter-spacing:-0.22px;">96</div>
<div style="left:622.20px;top:99.80px;width:5.40px;height:179.40px;background:#f4f4f4;border-left:0.5px solid #dcdcdc;"></div>
<div style="left:622.50px;top:107.00px;width:5.10px;height:32.00px;background:#a9a9a9;"></div>
<div style="left:11.30px;top:373.75px;width:616.30px;height:5.35px;background:#f1f1f1;border-top:0.5px solid #d8d8d8;"></div>
<div style="left:27.20px;top:374.05px;width:41.00px;height:4.70px;background:#bababa;"></div>
<div style="left:622.40px;top:362.60px;width:5.20px;height:5.20px;background:#f4f4f4;border:0.5px solid #cfcfcf;"></div>
<div style="left:622.40px;top:368.30px;width:5.20px;height:5.20px;background:#f4f4f4;border:0.5px solid #cfcfcf;"></div>
<div style="left:610.40px;top:374.20px;width:5.40px;height:4.80px;background:#fafafa;border:0.5px solid #cfcfcf;"></div>
<div style="left:616.60px;top:374.20px;width:5.40px;height:4.80px;background:#fafafa;border:0.5px solid #cfcfcf;"></div>
<svg style="left:600px;top:360px" width="30" height="22" viewBox="600 360 30 22"><path d="M623.8 366.2 L625 364.4 L626.2 366.2 Z M623.8 370 L625 371.8 L626.2 370 Z" fill="#6a6a6a"/><path d="M614 375.5 V377.7 L612.4 376.6 Z M618.6 375.5 V377.7 L620.2 376.6 Z" fill="#6a6a6a"/></svg>
<div style="left:11.30px;top:379.10px;width:616.30px;height:10.70px;background:linear-gradient(#d9d9d9,#e6e6e6 40%,#f0f0f0);"></div>
<svg style="left:0;top:0" width="640" height="400" viewBox="0 0 640 400"><rect x="11.30" y="379.1" width="85.50" height="10.70" fill="#fff"/></svg>
<div style="left:96.80px;top:379.10px;width:0.50px;height:10.70px;background:#cfcfcf;"></div>
<div class="t" style="font-size:5.7px;line-height:6.84px;top:381.48px;letter-spacing:0.058px;left:15.60px;color:#2a3346;-webkit-text-stroke:0.08px;">Lemonade stand performance</div>
</div></div></body></html>
